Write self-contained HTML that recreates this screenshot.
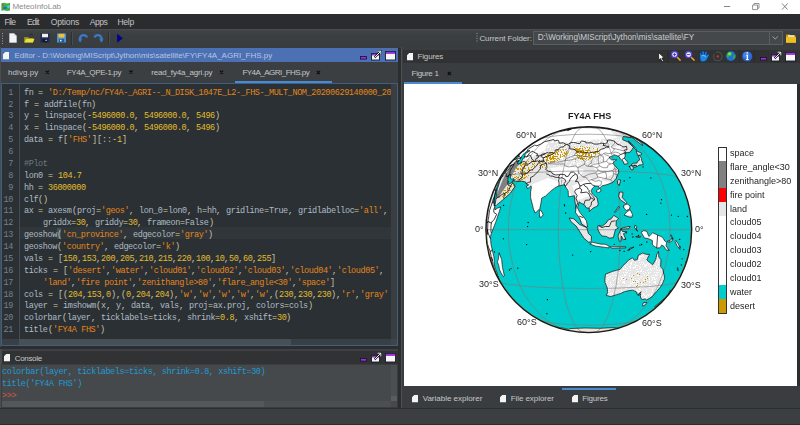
<!DOCTYPE html>
<html><head><meta charset="utf-8">
<style>
*{margin:0;padding:0;box-sizing:border-box}
html,body{width:800px;height:425px;overflow:hidden;background:#2b2d2f;font-family:"Liberation Sans",sans-serif}
.a{position:absolute}
.ui{position:absolute;font-family:"Liberation Sans",sans-serif;font-size:8px;color:#c4c8cb;white-space:pre;line-height:10px}
.cl,.ln{position:absolute;font-family:"Liberation Mono",monospace;font-size:8.5px;letter-spacing:-0.4px;line-height:12px;white-space:pre;color:#aebbc6}
.cl{left:24px}
.ln{left:0;width:13px;text-align:right;color:#758187}
.cl i{display:inline-block;font-style:normal;white-space:pre}
.s{color:#e3861a} .n{color:#e2bd2c} .o{color:#d7cf9f} .p{color:#c9c4a6} .c{color:#6e787e}
.gl{font-family:"Liberation Sans",sans-serif;font-size:9px;line-height:11px;color:#262626;white-space:pre;will-change:transform}
</style></head><body>
<!-- title bar -->
<div class="a" style="left:0;top:0;width:800px;height:14px;background:#fff"></div>
<svg class="a" style="left:0;top:1px" width="12" height="12" viewBox="0 0 12 12"><path d="M1.4 2.2 L4.2 1.8 L6.8 2.6 L10 2 V9.4 L6.8 10 L4.2 9.2 L1.4 9.8Z" fill="#34b034"/><path d="M4.2 1.8 V9.2 M6.8 2.6 V10" stroke="#6ad06a" stroke-width="0.5"/><ellipse cx="5" cy="7" rx="2" ry="1.3" fill="#2a6ad0"/><ellipse cx="8.6" cy="5.8" rx="1.3" ry="1.7" fill="#58c4f0"/><circle cx="3.4" cy="4.2" r="0.9" fill="#d04848"/></svg>
<div class="ui" style="left:12.40px;top:1.9px;font-size:8px;color:#8d8d8d;letter-spacing:-0.025px;">MeteoInfoLab</div>
<svg class="a" style="left:720px;top:0" width="80" height="14" viewBox="0 0 80 14">
<path d="M4 6.5 H10.2" stroke="#777" stroke-width="0.9"/>
<path d="M32.6 5 H37.5 V9.6 H32.6Z M34 5 V3.5 H39 V8.2 H37.5" fill="none" stroke="#888" stroke-width="0.9"/>
<path d="M62 3.4 L67.6 9.6 M67.6 3.4 L62 9.6" stroke="#777" stroke-width="0.9"/>
</svg>
<!-- menu bar -->
<div class="a" style="left:0;top:14px;width:800px;height:15px;background:#2b2c2e"></div>
<div class="ui" style="left:4.40px;top:16.6px;font-size:8.6px;color:#c2c2c2;letter-spacing:-0.756px;">File</div>
<div class="ui" style="left:27.10px;top:16.6px;font-size:8.6px;color:#c2c2c2;letter-spacing:-0.840px;">Edit</div>
<div class="ui" style="left:50.70px;top:16.6px;font-size:8.6px;color:#c2c2c2;letter-spacing:-0.153px;">Options</div>
<div class="ui" style="left:89.70px;top:16.6px;font-size:8.6px;color:#c2c2c2;letter-spacing:-0.464px;">Apps</div>
<div class="ui" style="left:117.50px;top:16.6px;font-size:8.6px;color:#c2c2c2;letter-spacing:-0.332px;">Help</div>
<!-- toolbar -->
<div class="a" style="left:0;top:29px;width:800px;height:19px;background:linear-gradient(#434648,#3c3f41 30%,#393c3e)"></div>
<div class="a" style="left:0;top:29px;width:800px;height:1px;background:#4a4d50"></div>
<svg class="a" style="left:0;top:29px" width="130" height="18" viewBox="0 0 130 18">
<g fill="#9a9a9a"><rect x="2" y="4" width="1" height="1"/><rect x="2" y="6.5" width="1" height="1"/><rect x="2" y="9" width="1" height="1"/><rect x="2" y="11.5" width="1" height="1"/><rect x="2" y="14" width="1" height="1"/></g>
<path d="M9.5 4.5 H14 L16.5 7 V13.5 H9.5Z" fill="#f2f4f8" stroke="#c8ccd4" stroke-width="0.6"/><path d="M14 4.5 V7 H16.5" fill="#d8dce4"/>
<path d="M24 8 H28 L29 9 H33 V13.5 H24Z" fill="#8a8a20"/><path d="M24.5 13.5 L26 9.8 H34.5 L33 13.5Z" fill="#e8e040"/><path d="M29 6.5 Q31 4 33 6" fill="none" stroke="#222" stroke-width="0.8"/>
<rect x="40.5" y="4.5" width="9" height="9" fill="#1a2a5a" stroke="#333" stroke-width="0.5"/><rect x="42" y="4.8" width="6" height="3.5" fill="#f0f0f0"/><rect x="42.5" y="10" width="5" height="3.3" fill="#101830"/><rect x="45.5" y="10.8" width="1.2" height="1.2" fill="#ddd"/>
<rect x="57" y="4.5" width="9" height="9" fill="#4a90d0"/><rect x="58.5" y="4.8" width="6" height="3.8" fill="#f0c040"/><rect x="59" y="10" width="5" height="3.3" fill="#2a5a90"/><rect x="60" y="10.8" width="1.5" height="1.5" fill="#fff"/>
<rect x="71" y="3" width="1" height="13" fill="#2e3032"/><rect x="72" y="3" width="1" height="13" fill="#4a4d4f"/>
<path d="M80 12.5 V9.5 A3.6 3.6 0 0 1 87 8.5" fill="none" stroke="#3a78c8" stroke-width="2.2"/><path d="M78 9.5 L80.2 13.5 L82.3 9.5Z" fill="#3a78c8"/>
<path d="M101.5 12.5 V9.5 A3.6 3.6 0 0 0 94.5 8.5" fill="none" stroke="#3a78c8" stroke-width="2.2"/><path d="M99.2 9.5 L101.3 13.5 L103.5 9.5Z" fill="#3a78c8"/>
<rect x="108" y="3" width="1" height="13" fill="#2e3032"/><rect x="109" y="3" width="1" height="13" fill="#4a4d4f"/>
<path d="M117.2 4.8 L122.8 9.3 L117.2 13.8Z" fill="#00008c"/>
</svg>
<div class="ui" style="left:479.45px;top:34px;font-size:8px;color:#c4c8cb;letter-spacing:-0.095px;">Current Folder:</div>
<svg class="a" style="left:476px;top:31px" width="3" height="14"><g fill="#9a9a9a"><rect x="0.5" y="2" width="1" height="1"/><rect x="0.5" y="4.5" width="1" height="1"/><rect x="0.5" y="7" width="1" height="1"/><rect x="0.5" y="9.5" width="1" height="1"/></g></svg>
<div class="a" style="left:533px;top:31px;width:250px;height:14px;background:#45484a;border:1px solid #5b5e61"></div>
<div class="a" style="left:768.5px;top:32px;width:1px;height:12px;background:#5b5e61"></div>
<svg class="a" style="left:770px;top:33px" width="12" height="10"><path d="M2.6 3.6 L5.2 6 L7.8 3.6" fill="none" stroke="#a8abae" stroke-width="0.9"/></svg>
<div class="ui" style="left:537.70px;top:33.3px;font-size:8.2px;color:#c9cdd0;letter-spacing:-0.008px;">D:\Working\MIScript\Jython\mis\satellite\FY</div>
<svg class="a" style="left:785px;top:33px" width="12" height="11" viewBox="0 0 12 11"><path d="M1 1.5 H4.5 L5.5 2.5 H10.5 V9.5 H1Z" fill="#c89a10"/><path d="M1 4 H11 V9.8 H1Z" fill="#f0c020"/><rect x="3" y="2.2" width="6.5" height="1.6" fill="#f8f0d0"/></svg>

<!-- ================= EDITOR ================= -->
<div class="a" style="left:1px;top:48px;width:397px;height:14px;background:#4b70b4"></div>
<svg class="a" style="left:3px;top:52px" width="7" height="8" viewBox="0 0 7 8"><path d="M2.3 0 H6 V7.2 H0 V2.3 Z" fill="#f4f4f4"/></svg>
<div class="ui" style="left:14.40px;top:50.9px;font-size:8px;color:#b9c7e0;letter-spacing:-0.012px;">Editor - D:\Working\MIScript\Jython\mis\satellite\FY\FY4A_AGRI_FHS.py</div>
<svg class="a" style="left:359.5px;top:49.5px" width="38" height="12" viewBox="0 0 38 12">
<rect x="0.5" y="6.5" width="6" height="2.6" fill="#9b30d9" stroke="#1a1030" stroke-width="0.8"/>
<rect x="11.5" y="3.5" width="8" height="6.5" fill="#f6f6f6" stroke="#1a1a2a" stroke-width="0.9"/>
<rect x="11.9" y="3.9" width="7.2" height="1.6" fill="#9b30d9"/>
<path d="M14.5 7.5 L20.6 1.4 M17.6 1.2 H20.8 V4.4" fill="none" stroke="#1a1a2a" stroke-width="2"/>
<path d="M14.5 7.5 L20.6 1.4 M17.6 1.2 H20.8 V4.4" fill="none" stroke="#fff" stroke-width="0.9"/>
<rect x="25.5" y="1.5" width="10" height="8.5" fill="#f6f6f6" stroke="#1a1a2a" stroke-width="0.9"/>
<rect x="25.9" y="1.9" width="9.2" height="2" fill="#9b30d9"/>
</svg>
<div class="a" style="left:0;top:62px;width:398px;height:21px;background:#3c3f41"></div>
<div class="ui" style="left:8.10px;top:67.7px;font-size:8px;color:#c2c6c9;letter-spacing:0.043px;">hdivg.py</div>
<div class="ui" style="left:66.80px;top:67.7px;font-size:8px;color:#c2c6c9;letter-spacing:-0.378px;">FY4A_QPE-1.py</div>
<div class="ui" style="left:151.30px;top:67.7px;font-size:8px;color:#c2c6c9;letter-spacing:-0.184px;">read_fy4a_agri.py</div>
<div class="ui" style="left:242.45px;top:67.7px;font-size:8px;color:#c2c6c9;letter-spacing:-0.526px;">FY4A_AGRI_FHS.py</div>
<div class="a" style="left:235px;top:81px;width:97px;height:2px;background:#4a8ad0"></div>
<svg class="a" style="left:0;top:0" width="460" height="80"><path d="M45.7 70.7L48.9 73.9M48.9 70.7L45.7 73.9M129.4 70.5L132.6 73.7M132.6 70.5L129.4 73.7M219.9 70.7L223.1 73.9M223.1 70.7L219.9 73.9M316.8 71.0L320.0 74.2M320.0 71.0L316.8 74.2M447.7 71.8L450.9 75.0M450.9 71.8L447.7 75.0" stroke="#0c0c0c" stroke-width="1.1"/></svg>

<!-- code area -->
<div class="a" style="left:0;top:83px;width:398px;height:263px;background:#2b3034;border:1px solid #3f5f82;border-left:2px solid #3f5f82;overflow:hidden">
</div>
<div class="a" style="left:19px;top:227px;width:372px;height:12px;background:#30363a"></div>
<div class="a" style="left:18.5px;top:84px;width:1px;height:255px;background:#464c51"></div>
<div class="a" style="left:0;top:47px;width:1px;height:300px;background:#4a4d4f"></div>
<div class="a" style="left:56.7px;top:227.5px;width:4.8px;height:11px;background:#3c5560"></div>
<div class="a" style="left:0;top:84px;width:391px;height:255px;overflow:hidden">
<div class="cl" style="top:2.65px"><i style="width:9px">fn</i><i style="width:5px"> </i><i class="o" style="width:5px">=</i><i style="width:5px"> </i><i class="s" style="width:475px">'D:/Temp/nc/FY4A-_AGRI--_N_DISK_1047E_L2-_FHS-_MULT_NOM_20200629140000_20200629141459_4000M_V0001.NC'</i></div>
<div class="ln" style="top:2.65px">1</div>
<div class="cl" style="top:14.53px"><i style="width:5px">f</i><i style="width:5px"> </i><i class="o" style="width:5px">=</i><i style="width:5px"> </i><i style="width:33px">addfile</i><i class="p" style="width:5px">(</i><i style="width:9px">fn</i><i class="p" style="width:5px">)</i></div>
<div class="ln" style="top:14.53px">2</div>
<div class="cl" style="top:26.40px"><i style="width:5px">y</i><i style="width:5px"> </i><i class="o" style="width:5px">=</i><i style="width:5px"> </i><i style="width:38px">linspace</i><i class="p" style="width:5px">(</i><i class="o" style="width:5px">-</i><i class="n" style="width:42px">5496000.0</i><i class="p" style="width:5px">,</i><i style="width:5px"> </i><i class="n" style="width:42px">5496000.0</i><i class="p" style="width:5px">,</i><i style="width:5px"> </i><i class="n" style="width:19px">5496</i><i class="p" style="width:5px">)</i></div>
<div class="ln" style="top:26.40px">3</div>
<div class="cl" style="top:38.28px"><i style="width:5px">x</i><i style="width:5px"> </i><i class="o" style="width:5px">=</i><i style="width:5px"> </i><i style="width:38px">linspace</i><i class="p" style="width:5px">(</i><i class="o" style="width:5px">-</i><i class="n" style="width:42px">5496000.0</i><i class="p" style="width:5px">,</i><i style="width:5px"> </i><i class="n" style="width:42px">5496000.0</i><i class="p" style="width:5px">,</i><i style="width:5px"> </i><i class="n" style="width:19px">5496</i><i class="p" style="width:5px">)</i></div>
<div class="ln" style="top:38.28px">4</div>
<div class="cl" style="top:50.15px"><i style="width:19px">data</i><i style="width:5px"> </i><i class="o" style="width:5px">=</i><i style="width:5px"> </i><i style="width:5px">f</i><i class="p" style="width:5px">[</i><i class="s" style="width:24px">'FHS'</i><i class="p" style="width:5px">]</i><i class="p" style="width:5px">[</i><i class="p" style="width:5px">:</i><i class="p" style="width:5px">:</i><i class="o" style="width:5px">-</i><i class="n" style="width:5px">1</i><i class="p" style="width:5px">]</i></div>
<div class="ln" style="top:50.15px">5</div>
<div class="cl" style="top:62.03px"></div>
<div class="ln" style="top:62.03px">6</div>
<div class="cl" style="top:73.90px"><i class="c" style="width:24px">#Plot</i></div>
<div class="ln" style="top:73.90px">7</div>
<div class="cl" style="top:85.78px"><i style="width:19px">lon0</i><i style="width:5px"> </i><i class="o" style="width:5px">=</i><i style="width:5px"> </i><i class="n" style="width:24px">104.7</i></div>
<div class="ln" style="top:85.78px">8</div>
<div class="cl" style="top:97.65px"><i style="width:9px">hh</i><i style="width:5px"> </i><i class="o" style="width:5px">=</i><i style="width:5px"> </i><i class="n" style="width:38px">36000000</i></div>
<div class="ln" style="top:97.65px">9</div>
<div class="cl" style="top:109.53px"><i style="width:14px">clf</i><i class="p" style="width:5px">(</i><i class="p" style="width:5px">)</i></div>
<div class="ln" style="top:109.53px">10</div>
<div class="cl" style="top:121.40px"><i style="width:9px">ax</i><i style="width:5px"> </i><i class="o" style="width:5px">=</i><i style="width:5px"> </i><i style="width:24px">axesm</i><i class="p" style="width:5px">(</i><i style="width:19px">proj</i><i class="o" style="width:5px">=</i><i class="s" style="width:28px">'geos'</i><i class="p" style="width:5px">,</i><i style="width:5px"> </i><i style="width:24px">lon_0</i><i class="o" style="width:5px">=</i><i style="width:19px">lon0</i><i class="p" style="width:5px">,</i><i style="width:5px"> </i><i style="width:5px">h</i><i class="o" style="width:5px">=</i><i style="width:9px">hh</i><i class="p" style="width:5px">,</i><i style="width:5px"> </i><i style="width:38px">gridline</i><i class="o" style="width:5px">=</i><i style="width:19px">True</i><i class="p" style="width:5px">,</i><i style="width:5px"> </i><i style="width:56px">gridlabelloc</i><i class="o" style="width:5px">=</i><i class="s" style="width:24px">'all'</i><i class="p" style="width:5px">,</i></div>
<div class="ln" style="top:121.40px">11</div>
<div class="cl" style="top:133.28px"><i style="width:19px">    </i><i style="width:28px">griddx</i><i class="o" style="width:5px">=</i><i class="n" style="width:9px">30</i><i class="p" style="width:5px">,</i><i style="width:5px"> </i><i style="width:28px">griddy</i><i class="o" style="width:5px">=</i><i class="n" style="width:9px">30</i><i class="p" style="width:5px">,</i><i style="width:5px"> </i><i style="width:33px">frameon</i><i class="o" style="width:5px">=</i><i style="width:24px">False</i><i class="p" style="width:5px">)</i></div>
<div class="ln" style="top:133.28px">12</div>
<div class="cl" style="top:145.15px"><i style="width:33px">geoshow</i><i class="p" style="width:5px">(</i><i class="s" style="width:61px">'cn_province'</i><i class="p" style="width:5px">,</i><i style="width:5px"> </i><i style="width:42px">edgecolor</i><i class="o" style="width:5px">=</i><i class="s" style="width:28px">'gray'</i><i class="p" style="width:5px">)</i></div>
<div class="ln" style="top:145.15px">13</div>
<div class="cl" style="top:157.03px"><i style="width:33px">geoshow</i><i class="p" style="width:5px">(</i><i class="s" style="width:42px">'country'</i><i class="p" style="width:5px">,</i><i style="width:5px"> </i><i style="width:42px">edgecolor</i><i class="o" style="width:5px">=</i><i class="s" style="width:14px">'k'</i><i class="p" style="width:5px">)</i></div>
<div class="ln" style="top:157.03px">14</div>
<div class="cl" style="top:168.90px"><i style="width:19px">vals</i><i style="width:5px"> </i><i class="o" style="width:5px">=</i><i style="width:5px"> </i><i class="p" style="width:5px">[</i><i class="n" style="width:14px">150</i><i class="p" style="width:5px">,</i><i class="n" style="width:14px">153</i><i class="p" style="width:5px">,</i><i class="n" style="width:14px">200</i><i class="p" style="width:5px">,</i><i class="n" style="width:14px">205</i><i class="p" style="width:5px">,</i><i class="n" style="width:14px">210</i><i class="p" style="width:5px">,</i><i class="n" style="width:14px">215</i><i class="p" style="width:5px">,</i><i class="n" style="width:14px">220</i><i class="p" style="width:5px">,</i><i class="n" style="width:14px">100</i><i class="p" style="width:5px">,</i><i class="n" style="width:9px">10</i><i class="p" style="width:5px">,</i><i class="n" style="width:9px">50</i><i class="p" style="width:5px">,</i><i class="n" style="width:9px">60</i><i class="p" style="width:5px">,</i><i class="n" style="width:14px">255</i><i class="p" style="width:5px">]</i></div>
<div class="ln" style="top:168.90px">15</div>
<div class="cl" style="top:180.77px"><i style="width:24px">ticks</i><i style="width:5px"> </i><i class="o" style="width:5px">=</i><i style="width:5px"> </i><i class="p" style="width:5px">[</i><i class="s" style="width:38px">'desert'</i><i class="p" style="width:5px">,</i><i class="s" style="width:33px">'water'</i><i class="p" style="width:5px">,</i><i class="s" style="width:42px">'cloud01'</i><i class="p" style="width:5px">,</i><i class="s" style="width:42px">'cloud02'</i><i class="p" style="width:5px">,</i><i class="s" style="width:42px">'cloud03'</i><i class="p" style="width:5px">,</i><i class="s" style="width:42px">'cloud04'</i><i class="p" style="width:5px">,</i><i class="s" style="width:42px">'cloud05'</i><i class="p" style="width:5px">,</i></div>
<div class="ln" style="top:180.77px">16</div>
<div class="cl" style="top:192.65px"><i style="width:19px">    </i><i class="s" style="width:28px">'land'</i><i class="p" style="width:5px">,</i><i class="s" style="width:56px">'fire point'</i><i class="p" style="width:5px">,</i><i class="s" style="width:75px">'zenithangle&gt;80'</i><i class="p" style="width:5px">,</i><i class="s" style="width:75px">'flare_angle&lt;30'</i><i class="p" style="width:5px">,</i><i class="s" style="width:33px">'space'</i><i class="p" style="width:5px">]</i></div>
<div class="ln" style="top:192.65px">17</div>
<div class="cl" style="top:204.52px"><i style="width:19px">cols</i><i style="width:5px"> </i><i class="o" style="width:5px">=</i><i style="width:5px"> </i><i class="p" style="width:5px">[</i><i class="p" style="width:5px">(</i><i class="n" style="width:14px">204</i><i class="p" style="width:5px">,</i><i class="n" style="width:14px">153</i><i class="p" style="width:5px">,</i><i class="n" style="width:5px">0</i><i class="p" style="width:5px">)</i><i class="p" style="width:5px">,</i><i class="p" style="width:5px">(</i><i class="n" style="width:5px">0</i><i class="p" style="width:5px">,</i><i class="n" style="width:14px">204</i><i class="p" style="width:5px">,</i><i class="n" style="width:14px">204</i><i class="p" style="width:5px">)</i><i class="p" style="width:5px">,</i><i class="s" style="width:14px">'w'</i><i class="p" style="width:5px">,</i><i class="s" style="width:14px">'w'</i><i class="p" style="width:5px">,</i><i class="s" style="width:14px">'w'</i><i class="p" style="width:5px">,</i><i class="s" style="width:14px">'w'</i><i class="p" style="width:5px">,</i><i class="s" style="width:14px">'w'</i><i class="p" style="width:5px">,</i><i class="p" style="width:5px">(</i><i class="n" style="width:14px">230</i><i class="p" style="width:5px">,</i><i class="n" style="width:14px">230</i><i class="p" style="width:5px">,</i><i class="n" style="width:14px">230</i><i class="p" style="width:5px">)</i><i class="p" style="width:5px">,</i><i class="s" style="width:14px">'r'</i><i class="p" style="width:5px">,</i><i class="s" style="width:28px">'gray'</i></div>
<div class="ln" style="top:204.52px">18</div>
<div class="cl" style="top:216.40px"><i style="width:24px">layer</i><i style="width:5px"> </i><i class="o" style="width:5px">=</i><i style="width:5px"> </i><i style="width:33px">imshowm</i><i class="p" style="width:5px">(</i><i style="width:5px">x</i><i class="p" style="width:5px">,</i><i style="width:5px"> </i><i style="width:5px">y</i><i class="p" style="width:5px">,</i><i style="width:5px"> </i><i style="width:19px">data</i><i class="p" style="width:5px">,</i><i style="width:5px"> </i><i style="width:19px">vals</i><i class="p" style="width:5px">,</i><i style="width:5px"> </i><i style="width:19px">proj</i><i class="o" style="width:5px">=</i><i style="width:9px">ax</i><i class="o" style="width:5px">.</i><i style="width:19px">proj</i><i class="p" style="width:5px">,</i><i style="width:5px"> </i><i style="width:28px">colors</i><i class="o" style="width:5px">=</i><i style="width:19px">cols</i><i class="p" style="width:5px">)</i></div>
<div class="ln" style="top:216.40px">19</div>
<div class="cl" style="top:228.27px"><i style="width:38px">colorbar</i><i class="p" style="width:5px">(</i><i style="width:24px">layer</i><i class="p" style="width:5px">,</i><i style="width:5px"> </i><i style="width:47px">ticklabels</i><i class="o" style="width:5px">=</i><i style="width:24px">ticks</i><i class="p" style="width:5px">,</i><i style="width:5px"> </i><i style="width:28px">shrink</i><i class="o" style="width:5px">=</i><i class="n" style="width:14px">0.8</i><i class="p" style="width:5px">,</i><i style="width:5px"> </i><i style="width:28px">xshift</i><i class="o" style="width:5px">=</i><i class="n" style="width:9px">30</i><i class="p" style="width:5px">)</i></div>
<div class="ln" style="top:228.27px">20</div>
<div class="cl" style="top:240.15px"><i style="width:24px">title</i><i class="p" style="width:5px">(</i><i class="s" style="width:47px">'FY4A FHS'</i><i class="p" style="width:5px">)</i></div>
<div class="ln" style="top:240.15px">21</div>
</div>
<div class="a" style="left:391px;top:84px;width:6px;height:255px;background:#3b3e41"></div>
<div class="a" style="left:2px;top:339px;width:389px;height:6px;background:#3a3f43"></div>
<div class="a" style="left:19px;top:339px;width:272px;height:6px;background:#4a4f53"></div>
<div class="a" style="left:391px;top:339px;width:6px;height:6px;background:#3f4448"></div>

<!-- ================= CONSOLE ================= -->
<div class="a" style="left:0;top:348.5px;width:398px;height:2.5px;background:#3e4143"></div>
<div class="a" style="left:0;top:351px;width:398px;height:13px;background:#303234"></div>
<div class="a" style="left:0;top:348.5px;width:1.5px;height:59px;background:#4a4d4f"></div>
<svg class="a" style="left:3.7px;top:354px" width="7" height="8" viewBox="0 0 7 8"><path d="M2.3 0 H6 V7.2 H0 V2.3 Z" fill="#f4f4f4"/></svg>
<div class="ui" style="left:14.70px;top:354px;font-size:8px;color:#c4c8cb;letter-spacing:-0.317px;">Console</div>
<svg class="a" style="left:359.5px;top:352px" width="38" height="12" viewBox="0 0 38 12">
<rect x="0.5" y="6.5" width="6" height="2.6" fill="#9b30d9" stroke="#1a1030" stroke-width="0.8"/>
<rect x="11.5" y="3.5" width="8" height="6.5" fill="#f6f6f6" stroke="#1a1a2a" stroke-width="0.9"/>
<rect x="11.9" y="3.9" width="7.2" height="1.6" fill="#9b30d9"/>
<path d="M14.5 7.5 L20.6 1.4 M17.6 1.2 H20.8 V4.4" fill="none" stroke="#1a1a2a" stroke-width="2"/>
<path d="M14.5 7.5 L20.6 1.4 M17.6 1.2 H20.8 V4.4" fill="none" stroke="#fff" stroke-width="0.9"/>
<rect x="25.5" y="1.5" width="10" height="8.5" fill="#f6f6f6" stroke="#1a1a2a" stroke-width="0.9"/>
<rect x="25.9" y="1.9" width="9.2" height="2" fill="#9b30d9"/>
</svg>
<div class="a" style="left:1px;top:364px;width:397px;height:44px;background:#46494b;border:1px solid #3a3c3e"></div>
<div class="cl" style="left:2px;top:366.2px;color:#1e9ad4">colorbar(layer, ticklabels=ticks, shrink=0.8, xshift=30)</div>
<div class="cl" style="left:2px;top:378.2px;color:#1e9ad4">title('FY4A FHS')</div>
<div class="cl" style="left:2px;top:390.2px;color:#d9534f">&gt;&gt;&gt;</div>
<div class="a" style="left:391px;top:365px;width:6px;height:36px;background:#4c4f51"></div>
<div class="a" style="left:391px;top:396px;width:6px;height:5px;background:#5a5d60"></div>
<div class="a" style="left:2px;top:401px;width:389px;height:6px;background:#4c4f51"></div>
<div class="a" style="left:2px;top:401px;width:262px;height:6px;background:#55585b"></div>

<!-- ================= FIGURES ================= -->
<div class="a" style="left:401px;top:47px;width:399px;height:361px;background:#3a3d3f;border-left:1px solid #4e5153"></div>
<div class="a" style="left:403px;top:49.5px;width:397px;height:13px;background:#303234"></div>
<svg class="a" style="left:406.5px;top:53px" width="7" height="8" viewBox="0 0 7 8"><path d="M2.3 0 H6 V7.2 H0 V2.3 Z" fill="#f4f4f4"/></svg>
<svg class="a" style="left:650px;top:48px" width="110" height="16" viewBox="650 48 110 16">
<path d="M658.6 52.6 V60.2 L660.4 58.6 L662.2 61.8 L663.6 61 L661.9 58 L664.3 57.8Z" fill="#fafafa" stroke="#111" stroke-width="0.8" stroke-linejoin="round"/>
<rect x="667.6" y="50" width="1" height="13" fill="#2a2c2e"/>
<path d="M676.6 56.6 L680.6 60.6" stroke="#222" stroke-width="2.6"/><path d="M676.6 56.6 L680.6 60.6" stroke="#f0a030" stroke-width="1.5"/>
<circle cx="674.6" cy="54.6" r="3.1" fill="#f4f2ff" stroke="#5040d0" stroke-width="1.3"/><path d="M672.9 54.6 H676.3 M674.6 52.9 V56.3" stroke="#4030b0" stroke-width="0.9"/>
<path d="M690.6 56.6 L694.6 60.6" stroke="#222" stroke-width="2.6"/><path d="M690.6 56.6 L694.6 60.6" stroke="#f0a030" stroke-width="1.5"/>
<circle cx="688.6" cy="54.6" r="3.1" fill="#f4f2ff" stroke="#5040d0" stroke-width="1.3"/><path d="M686.9 54.6 H690.3" stroke="#4030b0" stroke-width="0.9"/>
<path d="M700 55 Q699.5 52 701.2 52.5 L702 55 L702.2 51.3 Q703.5 50.6 704 51.5 L704.3 54.8 L705.5 51.6 Q706.8 51.3 707 52.4 L706.3 55.5 L708 54 Q709.5 54 709 55.6 L706.5 60 Q705 62 702.5 61.8 Q700 61.2 700 58.5Z" fill="#1e88e0" stroke="#0a3a80" stroke-width="0.6"/>
<path d="M701.5 56 Q703.5 54.5 706 56.5" fill="none" stroke="#8fd0ff" stroke-width="0.8"/>
<circle cx="717.8" cy="56.4" r="4.3" fill="none" stroke="#4a4c4e" stroke-width="1.3"/><rect x="713" y="51" width="3" height="3" fill="#303234"/>
<circle cx="717.8" cy="56.4" r="1.2" fill="#d83020"/>
<circle cx="730.9" cy="56.1" r="4.8" fill="#2070d8"/>
<path d="M727 53.5 Q729 51.5 731 52 L732.5 54 L731 56 L729.5 55.5 L728.5 57.5 L726.5 57 Z M733 55.5 L735.5 55 L735.2 58 L733.5 59.5Z" fill="#30b030"/>
<circle cx="729.5" cy="53.8" r="1.6" fill="#a8f0a0" opacity="0.6"/>
<rect x="739.2" y="50" width="1" height="13" fill="#2a2c2e"/>
<circle cx="747.2" cy="56.4" r="5" fill="#2a68d8"/><circle cx="746.4" cy="55" r="3.2" fill="#5a94f0" opacity="0.6"/>
<path d="M746.6 52.3 h1.4 v1.3 h-1.4z M746.2 54.8 h1.8 v4.2 h0.7 v0.9 h-2.6 v-0.9 h0.6 v-3.3 h-0.5z" fill="#fff"/>
<rect x="754" y="50" width="1" height="13" fill="#2a2c2e"/>
</svg>
<svg class="a" style="left:760px;top:51px" width="38" height="12" viewBox="0 0 38 12">
<rect x="0.5" y="6.5" width="6" height="2.6" fill="#9b30d9" stroke="#1a1030" stroke-width="0.8"/>
<rect x="11.5" y="3.5" width="8" height="6.5" fill="#f6f6f6" stroke="#1a1a2a" stroke-width="0.9"/>
<rect x="11.9" y="3.9" width="7.2" height="1.6" fill="#9b30d9"/>
<path d="M14.5 7.5 L20.6 1.4 M17.6 1.2 H20.8 V4.4" fill="none" stroke="#1a1a2a" stroke-width="2"/>
<path d="M14.5 7.5 L20.6 1.4 M17.6 1.2 H20.8 V4.4" fill="none" stroke="#fff" stroke-width="0.9"/>
<rect x="25.5" y="1.5" width="10" height="8.5" fill="#f6f6f6" stroke="#1a1a2a" stroke-width="0.9"/>
<rect x="25.9" y="1.9" width="9.2" height="2" fill="#9b30d9"/>
</svg>
<div class="ui" style="left:417.50px;top:52px;font-size:8px;color:#c4c8cb;letter-spacing:-0.146px;">Figures</div>
<div class="ui" style="left:411.60px;top:69px;font-size:8px;color:#c4c8cb;letter-spacing:-0.300px;">Figure 1</div>
<div class="a" style="left:404px;top:82px;width:58px;height:2px;background:#4a8ad0"></div>
<svg class="a" style="left:440px;top:65px" width="20" height="16"><path d="M7.7 6.8L10.9 10M10.9 6.8L7.7 10" stroke="#0c0c0c" stroke-width="1.1"/></svg>
<div class="a" style="left:404px;top:84px;width:393px;height:302px;background:#fff"></div>
<div class="a" style="left:797px;top:84px;width:3px;height:302px;background:#2b2d2f"></div>
<svg class="a" style="left:0;top:0" width="800" height="425" viewBox="0 0 800 425">
<defs><pattern id="pd" width="29" height="29" patternUnits="userSpaceOnUse"><path fill="#cc9900" d="M0 0h1v1h-1zM3 0h1v1h-1zM4 0h1v1h-1zM5 0h1v1h-1zM8 0h1v1h-1zM9 0h1v1h-1zM11 0h1v1h-1zM13 0h1v1h-1zM14 0h1v1h-1zM16 0h1v1h-1zM19 0h1v1h-1zM20 0h1v1h-1zM21 0h1v1h-1zM23 0h1v1h-1zM24 0h1v1h-1zM25 0h1v1h-1zM26 0h1v1h-1zM27 0h1v1h-1zM28 0h1v1h-1zM0 1h1v1h-1zM1 1h1v1h-1zM2 1h1v1h-1zM3 1h1v1h-1zM4 1h1v1h-1zM5 1h1v1h-1zM6 1h1v1h-1zM8 1h1v1h-1zM10 1h1v1h-1zM13 1h1v1h-1zM14 1h1v1h-1zM18 1h1v1h-1zM21 1h1v1h-1zM22 1h1v1h-1zM25 1h1v1h-1zM26 1h1v1h-1zM27 1h1v1h-1zM28 1h1v1h-1zM1 2h1v1h-1zM2 2h1v1h-1zM3 2h1v1h-1zM6 2h1v1h-1zM7 2h1v1h-1zM8 2h1v1h-1zM10 2h1v1h-1zM11 2h1v1h-1zM12 2h1v1h-1zM13 2h1v1h-1zM14 2h1v1h-1zM17 2h1v1h-1zM18 2h1v1h-1zM19 2h1v1h-1zM20 2h1v1h-1zM23 2h1v1h-1zM25 2h1v1h-1zM26 2h1v1h-1zM28 2h1v1h-1zM0 3h1v1h-1zM1 3h1v1h-1zM2 3h1v1h-1zM4 3h1v1h-1zM10 3h1v1h-1zM11 3h1v1h-1zM12 3h1v1h-1zM13 3h1v1h-1zM15 3h1v1h-1zM16 3h1v1h-1zM17 3h1v1h-1zM18 3h1v1h-1zM19 3h1v1h-1zM20 3h1v1h-1zM21 3h1v1h-1zM24 3h1v1h-1zM25 3h1v1h-1zM26 3h1v1h-1zM27 3h1v1h-1zM28 3h1v1h-1zM4 4h1v1h-1zM7 4h1v1h-1zM8 4h1v1h-1zM9 4h1v1h-1zM11 4h1v1h-1zM12 4h1v1h-1zM14 4h1v1h-1zM15 4h1v1h-1zM16 4h1v1h-1zM17 4h1v1h-1zM18 4h1v1h-1zM19 4h1v1h-1zM21 4h1v1h-1zM22 4h1v1h-1zM23 4h1v1h-1zM24 4h1v1h-1zM25 4h1v1h-1zM26 4h1v1h-1zM27 4h1v1h-1zM28 4h1v1h-1zM1 5h1v1h-1zM2 5h1v1h-1zM5 5h1v1h-1zM6 5h1v1h-1zM7 5h1v1h-1zM9 5h1v1h-1zM12 5h1v1h-1zM13 5h1v1h-1zM16 5h1v1h-1zM17 5h1v1h-1zM19 5h1v1h-1zM20 5h1v1h-1zM21 5h1v1h-1zM23 5h1v1h-1zM24 5h1v1h-1zM27 5h1v1h-1zM0 6h1v1h-1zM3 6h1v1h-1zM4 6h1v1h-1zM5 6h1v1h-1zM7 6h1v1h-1zM10 6h1v1h-1zM11 6h1v1h-1zM15 6h1v1h-1zM16 6h1v1h-1zM17 6h1v1h-1zM18 6h1v1h-1zM20 6h1v1h-1zM21 6h1v1h-1zM22 6h1v1h-1zM24 6h1v1h-1zM25 6h1v1h-1zM26 6h1v1h-1zM0 7h1v1h-1zM1 7h1v1h-1zM2 7h1v1h-1zM5 7h1v1h-1zM6 7h1v1h-1zM10 7h1v1h-1zM13 7h1v1h-1zM15 7h1v1h-1zM17 7h1v1h-1zM18 7h1v1h-1zM20 7h1v1h-1zM24 7h1v1h-1zM25 7h1v1h-1zM26 7h1v1h-1zM2 8h1v1h-1zM3 8h1v1h-1zM4 8h1v1h-1zM5 8h1v1h-1zM6 8h1v1h-1zM10 8h1v1h-1zM13 8h1v1h-1zM14 8h1v1h-1zM15 8h1v1h-1zM16 8h1v1h-1zM17 8h1v1h-1zM19 8h1v1h-1zM21 8h1v1h-1zM22 8h1v1h-1zM25 8h1v1h-1zM27 8h1v1h-1zM28 8h1v1h-1zM1 9h1v1h-1zM2 9h1v1h-1zM4 9h1v1h-1zM5 9h1v1h-1zM6 9h1v1h-1zM7 9h1v1h-1zM9 9h1v1h-1zM11 9h1v1h-1zM14 9h1v1h-1zM15 9h1v1h-1zM16 9h1v1h-1zM17 9h1v1h-1zM19 9h1v1h-1zM20 9h1v1h-1zM22 9h1v1h-1zM23 9h1v1h-1zM24 9h1v1h-1zM25 9h1v1h-1zM26 9h1v1h-1zM1 10h1v1h-1zM2 10h1v1h-1zM5 10h1v1h-1zM8 10h1v1h-1zM9 10h1v1h-1zM10 10h1v1h-1zM11 10h1v1h-1zM12 10h1v1h-1zM13 10h1v1h-1zM15 10h1v1h-1zM19 10h1v1h-1zM20 10h1v1h-1zM21 10h1v1h-1zM22 10h1v1h-1zM25 10h1v1h-1zM26 10h1v1h-1zM27 10h1v1h-1zM28 10h1v1h-1zM0 11h1v1h-1zM1 11h1v1h-1zM2 11h1v1h-1zM3 11h1v1h-1zM4 11h1v1h-1zM5 11h1v1h-1zM6 11h1v1h-1zM7 11h1v1h-1zM9 11h1v1h-1zM11 11h1v1h-1zM13 11h1v1h-1zM14 11h1v1h-1zM16 11h1v1h-1zM18 11h1v1h-1zM22 11h1v1h-1zM23 11h1v1h-1zM24 11h1v1h-1zM26 11h1v1h-1zM28 11h1v1h-1zM1 12h1v1h-1zM2 12h1v1h-1zM9 12h1v1h-1zM10 12h1v1h-1zM11 12h1v1h-1zM14 12h1v1h-1zM15 12h1v1h-1zM18 12h1v1h-1zM19 12h1v1h-1zM21 12h1v1h-1zM22 12h1v1h-1zM23 12h1v1h-1zM24 12h1v1h-1zM25 12h1v1h-1zM27 12h1v1h-1zM28 12h1v1h-1zM0 13h1v1h-1zM1 13h1v1h-1zM2 13h1v1h-1zM3 13h1v1h-1zM4 13h1v1h-1zM6 13h1v1h-1zM7 13h1v1h-1zM9 13h1v1h-1zM10 13h1v1h-1zM11 13h1v1h-1zM12 13h1v1h-1zM14 13h1v1h-1zM17 13h1v1h-1zM18 13h1v1h-1zM19 13h1v1h-1zM20 13h1v1h-1zM21 13h1v1h-1zM22 13h1v1h-1zM25 13h1v1h-1zM27 13h1v1h-1zM28 13h1v1h-1zM0 14h1v1h-1zM2 14h1v1h-1zM5 14h1v1h-1zM8 14h1v1h-1zM11 14h1v1h-1zM15 14h1v1h-1zM16 14h1v1h-1zM17 14h1v1h-1zM18 14h1v1h-1zM19 14h1v1h-1zM21 14h1v1h-1zM24 14h1v1h-1zM25 14h1v1h-1zM26 14h1v1h-1zM28 14h1v1h-1zM3 15h1v1h-1zM6 15h1v1h-1zM11 15h1v1h-1zM14 15h1v1h-1zM16 15h1v1h-1zM17 15h1v1h-1zM18 15h1v1h-1zM19 15h1v1h-1zM22 15h1v1h-1zM24 15h1v1h-1zM25 15h1v1h-1zM26 15h1v1h-1zM27 15h1v1h-1zM0 16h1v1h-1zM1 16h1v1h-1zM2 16h1v1h-1zM3 16h1v1h-1zM7 16h1v1h-1zM8 16h1v1h-1zM9 16h1v1h-1zM10 16h1v1h-1zM11 16h1v1h-1zM12 16h1v1h-1zM17 16h1v1h-1zM18 16h1v1h-1zM21 16h1v1h-1zM22 16h1v1h-1zM23 16h1v1h-1zM24 16h1v1h-1zM26 16h1v1h-1zM28 16h1v1h-1zM3 17h1v1h-1zM4 17h1v1h-1zM5 17h1v1h-1zM6 17h1v1h-1zM7 17h1v1h-1zM8 17h1v1h-1zM9 17h1v1h-1zM10 17h1v1h-1zM11 17h1v1h-1zM12 17h1v1h-1zM13 17h1v1h-1zM14 17h1v1h-1zM17 17h1v1h-1zM19 17h1v1h-1zM20 17h1v1h-1zM21 17h1v1h-1zM22 17h1v1h-1zM23 17h1v1h-1zM26 17h1v1h-1zM28 17h1v1h-1zM1 18h1v1h-1zM4 18h1v1h-1zM5 18h1v1h-1zM7 18h1v1h-1zM8 18h1v1h-1zM9 18h1v1h-1zM10 18h1v1h-1zM11 18h1v1h-1zM12 18h1v1h-1zM14 18h1v1h-1zM18 18h1v1h-1zM23 18h1v1h-1zM3 19h1v1h-1zM4 19h1v1h-1zM7 19h1v1h-1zM8 19h1v1h-1zM10 19h1v1h-1zM11 19h1v1h-1zM12 19h1v1h-1zM13 19h1v1h-1zM15 19h1v1h-1zM16 19h1v1h-1zM18 19h1v1h-1zM19 19h1v1h-1zM22 19h1v1h-1zM25 19h1v1h-1zM26 19h1v1h-1zM28 19h1v1h-1zM0 20h1v1h-1zM2 20h1v1h-1zM3 20h1v1h-1zM4 20h1v1h-1zM6 20h1v1h-1zM10 20h1v1h-1zM12 20h1v1h-1zM13 20h1v1h-1zM14 20h1v1h-1zM17 20h1v1h-1zM18 20h1v1h-1zM22 20h1v1h-1zM25 20h1v1h-1zM26 20h1v1h-1zM0 21h1v1h-1zM2 21h1v1h-1zM4 21h1v1h-1zM8 21h1v1h-1zM9 21h1v1h-1zM10 21h1v1h-1zM11 21h1v1h-1zM13 21h1v1h-1zM15 21h1v1h-1zM18 21h1v1h-1zM19 21h1v1h-1zM20 21h1v1h-1zM21 21h1v1h-1zM22 21h1v1h-1zM23 21h1v1h-1zM24 21h1v1h-1zM25 21h1v1h-1zM27 21h1v1h-1zM28 21h1v1h-1zM4 22h1v1h-1zM6 22h1v1h-1zM8 22h1v1h-1zM9 22h1v1h-1zM10 22h1v1h-1zM11 22h1v1h-1zM12 22h1v1h-1zM13 22h1v1h-1zM15 22h1v1h-1zM16 22h1v1h-1zM17 22h1v1h-1zM19 22h1v1h-1zM20 22h1v1h-1zM23 22h1v1h-1zM26 22h1v1h-1zM27 22h1v1h-1zM28 22h1v1h-1zM1 23h1v1h-1zM4 23h1v1h-1zM6 23h1v1h-1zM7 23h1v1h-1zM9 23h1v1h-1zM10 23h1v1h-1zM11 23h1v1h-1zM12 23h1v1h-1zM15 23h1v1h-1zM16 23h1v1h-1zM18 23h1v1h-1zM19 23h1v1h-1zM20 23h1v1h-1zM21 23h1v1h-1zM22 23h1v1h-1zM28 23h1v1h-1zM3 24h1v1h-1zM4 24h1v1h-1zM6 24h1v1h-1zM7 24h1v1h-1zM9 24h1v1h-1zM10 24h1v1h-1zM11 24h1v1h-1zM12 24h1v1h-1zM13 24h1v1h-1zM14 24h1v1h-1zM16 24h1v1h-1zM22 24h1v1h-1zM24 24h1v1h-1zM28 24h1v1h-1zM0 25h1v1h-1zM2 25h1v1h-1zM3 25h1v1h-1zM5 25h1v1h-1zM6 25h1v1h-1zM7 25h1v1h-1zM8 25h1v1h-1zM9 25h1v1h-1zM12 25h1v1h-1zM13 25h1v1h-1zM14 25h1v1h-1zM16 25h1v1h-1zM17 25h1v1h-1zM18 25h1v1h-1zM20 25h1v1h-1zM21 25h1v1h-1zM25 25h1v1h-1zM26 25h1v1h-1zM27 25h1v1h-1zM28 25h1v1h-1zM0 26h1v1h-1zM1 26h1v1h-1zM4 26h1v1h-1zM5 26h1v1h-1zM7 26h1v1h-1zM12 26h1v1h-1zM15 26h1v1h-1zM16 26h1v1h-1zM17 26h1v1h-1zM18 26h1v1h-1zM19 26h1v1h-1zM20 26h1v1h-1zM21 26h1v1h-1zM22 26h1v1h-1zM25 26h1v1h-1zM26 26h1v1h-1zM27 26h1v1h-1zM28 26h1v1h-1zM1 27h1v1h-1zM2 27h1v1h-1zM3 27h1v1h-1zM5 27h1v1h-1zM6 27h1v1h-1zM7 27h1v1h-1zM9 27h1v1h-1zM17 27h1v1h-1zM18 27h1v1h-1zM19 27h1v1h-1zM24 27h1v1h-1zM27 27h1v1h-1zM28 27h1v1h-1zM1 28h1v1h-1zM2 28h1v1h-1zM3 28h1v1h-1zM5 28h1v1h-1zM7 28h1v1h-1zM8 28h1v1h-1zM10 28h1v1h-1zM11 28h1v1h-1zM12 28h1v1h-1zM13 28h1v1h-1zM14 28h1v1h-1zM15 28h1v1h-1zM17 28h1v1h-1zM18 28h1v1h-1zM19 28h1v1h-1zM22 28h1v1h-1zM24 28h1v1h-1zM25 28h1v1h-1zM28 28h1v1h-1z"/></pattern><pattern id="pm" width="29" height="29" patternUnits="userSpaceOnUse"><path fill="#cc9900" d="M2 0h1v1h-1zM3 0h1v1h-1zM11 0h1v1h-1zM19 0h1v1h-1zM20 0h1v1h-1zM21 0h1v1h-1zM28 0h1v1h-1zM0 1h1v1h-1zM2 1h1v1h-1zM6 1h1v1h-1zM16 1h1v1h-1zM4 2h1v1h-1zM7 2h1v1h-1zM9 2h1v1h-1zM19 2h1v1h-1zM23 2h1v1h-1zM27 2h1v1h-1zM0 3h1v1h-1zM2 3h1v1h-1zM3 3h1v1h-1zM5 3h1v1h-1zM8 3h1v1h-1zM9 3h1v1h-1zM13 3h1v1h-1zM15 3h1v1h-1zM17 3h1v1h-1zM19 3h1v1h-1zM21 3h1v1h-1zM22 3h1v1h-1zM24 3h1v1h-1zM25 3h1v1h-1zM28 3h1v1h-1zM1 4h1v1h-1zM2 4h1v1h-1zM6 4h1v1h-1zM8 4h1v1h-1zM17 4h1v1h-1zM20 4h1v1h-1zM23 4h1v1h-1zM27 4h1v1h-1zM0 5h1v1h-1zM3 5h1v1h-1zM5 5h1v1h-1zM6 5h1v1h-1zM7 5h1v1h-1zM8 5h1v1h-1zM9 5h1v1h-1zM15 5h1v1h-1zM17 5h1v1h-1zM22 5h1v1h-1zM25 5h1v1h-1zM26 5h1v1h-1zM28 5h1v1h-1zM1 6h1v1h-1zM2 6h1v1h-1zM3 6h1v1h-1zM4 6h1v1h-1zM5 6h1v1h-1zM10 6h1v1h-1zM17 6h1v1h-1zM20 6h1v1h-1zM21 6h1v1h-1zM27 6h1v1h-1zM1 7h1v1h-1zM3 7h1v1h-1zM7 7h1v1h-1zM11 7h1v1h-1zM13 7h1v1h-1zM14 7h1v1h-1zM17 7h1v1h-1zM19 7h1v1h-1zM25 7h1v1h-1zM26 7h1v1h-1zM27 7h1v1h-1zM3 8h1v1h-1zM11 8h1v1h-1zM18 8h1v1h-1zM19 8h1v1h-1zM21 8h1v1h-1zM27 8h1v1h-1zM1 9h1v1h-1zM3 9h1v1h-1zM4 9h1v1h-1zM8 9h1v1h-1zM9 9h1v1h-1zM10 9h1v1h-1zM15 9h1v1h-1zM19 9h1v1h-1zM22 9h1v1h-1zM1 10h1v1h-1zM3 10h1v1h-1zM6 10h1v1h-1zM20 10h1v1h-1zM26 10h1v1h-1zM3 11h1v1h-1zM9 11h1v1h-1zM12 11h1v1h-1zM15 11h1v1h-1zM17 11h1v1h-1zM20 11h1v1h-1zM23 11h1v1h-1zM25 11h1v1h-1zM26 11h1v1h-1zM5 12h1v1h-1zM7 12h1v1h-1zM8 12h1v1h-1zM10 12h1v1h-1zM17 12h1v1h-1zM18 12h1v1h-1zM21 12h1v1h-1zM22 12h1v1h-1zM6 13h1v1h-1zM14 13h1v1h-1zM22 13h1v1h-1zM24 13h1v1h-1zM25 13h1v1h-1zM27 13h1v1h-1zM3 14h1v1h-1zM5 14h1v1h-1zM7 14h1v1h-1zM14 14h1v1h-1zM15 14h1v1h-1zM16 14h1v1h-1zM21 14h1v1h-1zM9 15h1v1h-1zM14 15h1v1h-1zM19 15h1v1h-1zM21 15h1v1h-1zM22 15h1v1h-1zM1 16h1v1h-1zM4 16h1v1h-1zM6 16h1v1h-1zM9 16h1v1h-1zM10 16h1v1h-1zM11 16h1v1h-1zM12 16h1v1h-1zM14 16h1v1h-1zM16 16h1v1h-1zM17 16h1v1h-1zM22 16h1v1h-1zM23 16h1v1h-1zM27 16h1v1h-1zM20 17h1v1h-1zM21 17h1v1h-1zM23 17h1v1h-1zM27 17h1v1h-1zM1 18h1v1h-1zM2 18h1v1h-1zM4 18h1v1h-1zM5 18h1v1h-1zM7 18h1v1h-1zM10 18h1v1h-1zM12 18h1v1h-1zM15 18h1v1h-1zM17 18h1v1h-1zM18 18h1v1h-1zM24 18h1v1h-1zM26 18h1v1h-1zM27 18h1v1h-1zM28 18h1v1h-1zM0 19h1v1h-1zM1 19h1v1h-1zM2 19h1v1h-1zM10 19h1v1h-1zM11 19h1v1h-1zM14 19h1v1h-1zM16 19h1v1h-1zM24 19h1v1h-1zM27 19h1v1h-1zM2 20h1v1h-1zM4 20h1v1h-1zM5 20h1v1h-1zM12 20h1v1h-1zM17 20h1v1h-1zM18 20h1v1h-1zM19 20h1v1h-1zM22 20h1v1h-1zM27 20h1v1h-1zM28 20h1v1h-1zM2 21h1v1h-1zM10 21h1v1h-1zM12 21h1v1h-1zM14 21h1v1h-1zM20 21h1v1h-1zM28 21h1v1h-1zM0 22h1v1h-1zM2 22h1v1h-1zM6 22h1v1h-1zM9 22h1v1h-1zM15 22h1v1h-1zM17 22h1v1h-1zM18 22h1v1h-1zM20 22h1v1h-1zM23 22h1v1h-1zM0 23h1v1h-1zM2 23h1v1h-1zM3 23h1v1h-1zM6 23h1v1h-1zM13 23h1v1h-1zM14 23h1v1h-1zM17 23h1v1h-1zM23 23h1v1h-1zM24 23h1v1h-1zM25 23h1v1h-1zM27 23h1v1h-1zM6 24h1v1h-1zM7 24h1v1h-1zM10 24h1v1h-1zM13 24h1v1h-1zM17 24h1v1h-1zM24 24h1v1h-1zM25 24h1v1h-1zM27 24h1v1h-1zM28 24h1v1h-1zM5 25h1v1h-1zM7 25h1v1h-1zM10 25h1v1h-1zM19 25h1v1h-1zM28 25h1v1h-1zM2 26h1v1h-1zM7 26h1v1h-1zM13 26h1v1h-1zM14 26h1v1h-1zM19 26h1v1h-1zM21 26h1v1h-1zM22 26h1v1h-1zM27 26h1v1h-1zM0 27h1v1h-1zM1 27h1v1h-1zM2 27h1v1h-1zM3 27h1v1h-1zM6 27h1v1h-1zM8 27h1v1h-1zM13 27h1v1h-1zM25 27h1v1h-1zM27 27h1v1h-1zM0 28h1v1h-1zM5 28h1v1h-1zM9 28h1v1h-1zM10 28h1v1h-1zM15 28h1v1h-1zM22 28h1v1h-1z"/></pattern><pattern id="ps" width="31" height="31" patternUnits="userSpaceOnUse"><path fill="#cc9900" d="M6 0h1v1h-1zM25 0h1v1h-1zM13 2h1v1h-1zM15 2h1v1h-1zM25 2h1v1h-1zM30 2h1v1h-1zM20 3h1v1h-1zM23 3h1v1h-1zM2 4h1v1h-1zM17 4h1v1h-1zM29 5h1v1h-1zM17 6h1v1h-1zM24 6h1v1h-1zM16 7h1v1h-1zM19 7h1v1h-1zM26 7h1v1h-1zM23 9h1v1h-1zM26 9h1v1h-1zM0 10h1v1h-1zM9 10h1v1h-1zM3 12h1v1h-1zM19 13h1v1h-1zM18 15h1v1h-1zM19 16h1v1h-1zM3 17h1v1h-1zM11 17h1v1h-1zM13 18h1v1h-1zM3 19h1v1h-1zM13 19h1v1h-1zM18 19h1v1h-1zM25 19h1v1h-1zM19 20h1v1h-1zM20 20h1v1h-1zM23 20h1v1h-1zM2 21h1v1h-1zM3 22h1v1h-1zM27 22h1v1h-1zM0 23h1v1h-1zM15 23h1v1h-1zM17 25h1v1h-1zM19 26h1v1h-1zM0 27h1v1h-1zM2 27h1v1h-1zM13 27h1v1h-1zM28 27h1v1h-1zM27 28h1v1h-1zM3 30h1v1h-1zM11 30h1v1h-1zM27 30h1v1h-1z"/></pattern><pattern id="pwh" width="31" height="31" patternUnits="userSpaceOnUse"><path fill="#ffffff" d="M1 0h1v1h-1zM3 0h1v1h-1zM4 0h1v1h-1zM12 0h1v1h-1zM13 0h1v1h-1zM19 0h1v1h-1zM25 0h1v1h-1zM29 0h1v1h-1zM0 1h1v1h-1zM13 1h1v1h-1zM16 1h1v1h-1zM17 1h1v1h-1zM24 1h1v1h-1zM3 2h1v1h-1zM4 2h1v1h-1zM10 2h1v1h-1zM12 2h1v1h-1zM18 2h1v1h-1zM27 2h1v1h-1zM29 2h1v1h-1zM2 3h1v1h-1zM3 3h1v1h-1zM4 3h1v1h-1zM8 3h1v1h-1zM12 3h1v1h-1zM13 3h1v1h-1zM14 3h1v1h-1zM16 3h1v1h-1zM17 3h1v1h-1zM21 3h1v1h-1zM29 3h1v1h-1zM4 4h1v1h-1zM10 4h1v1h-1zM11 4h1v1h-1zM21 4h1v1h-1zM6 5h1v1h-1zM10 5h1v1h-1zM12 5h1v1h-1zM15 5h1v1h-1zM16 5h1v1h-1zM22 5h1v1h-1zM24 5h1v1h-1zM26 5h1v1h-1zM8 6h1v1h-1zM9 6h1v1h-1zM14 6h1v1h-1zM18 6h1v1h-1zM21 6h1v1h-1zM29 6h1v1h-1zM30 6h1v1h-1zM6 7h1v1h-1zM8 7h1v1h-1zM13 7h1v1h-1zM15 7h1v1h-1zM16 7h1v1h-1zM22 7h1v1h-1zM28 7h1v1h-1zM15 8h1v1h-1zM19 8h1v1h-1zM20 8h1v1h-1zM21 8h1v1h-1zM23 8h1v1h-1zM29 8h1v1h-1zM1 9h1v1h-1zM5 9h1v1h-1zM6 9h1v1h-1zM12 9h1v1h-1zM19 9h1v1h-1zM11 10h1v1h-1zM12 10h1v1h-1zM19 10h1v1h-1zM20 10h1v1h-1zM26 10h1v1h-1zM1 11h1v1h-1zM5 11h1v1h-1zM12 11h1v1h-1zM13 11h1v1h-1zM14 11h1v1h-1zM16 11h1v1h-1zM17 11h1v1h-1zM1 12h1v1h-1zM4 12h1v1h-1zM5 12h1v1h-1zM14 12h1v1h-1zM16 12h1v1h-1zM18 12h1v1h-1zM19 12h1v1h-1zM26 12h1v1h-1zM5 13h1v1h-1zM12 13h1v1h-1zM0 14h1v1h-1zM7 14h1v1h-1zM11 14h1v1h-1zM15 14h1v1h-1zM19 14h1v1h-1zM21 14h1v1h-1zM23 14h1v1h-1zM0 15h1v1h-1zM10 15h1v1h-1zM11 15h1v1h-1zM23 15h1v1h-1zM27 15h1v1h-1zM29 15h1v1h-1zM0 16h1v1h-1zM1 16h1v1h-1zM7 16h1v1h-1zM11 16h1v1h-1zM14 16h1v1h-1zM20 16h1v1h-1zM22 16h1v1h-1zM24 16h1v1h-1zM26 16h1v1h-1zM28 16h1v1h-1zM4 17h1v1h-1zM10 17h1v1h-1zM15 17h1v1h-1zM16 17h1v1h-1zM17 17h1v1h-1zM25 17h1v1h-1zM26 17h1v1h-1zM30 17h1v1h-1zM5 18h1v1h-1zM9 18h1v1h-1zM10 18h1v1h-1zM15 18h1v1h-1zM19 18h1v1h-1zM24 18h1v1h-1zM25 18h1v1h-1zM29 18h1v1h-1zM5 19h1v1h-1zM10 19h1v1h-1zM13 19h1v1h-1zM14 19h1v1h-1zM15 19h1v1h-1zM20 19h1v1h-1zM1 20h1v1h-1zM3 20h1v1h-1zM7 20h1v1h-1zM10 20h1v1h-1zM13 20h1v1h-1zM19 20h1v1h-1zM30 20h1v1h-1zM3 21h1v1h-1zM5 21h1v1h-1zM16 21h1v1h-1zM17 21h1v1h-1zM21 21h1v1h-1zM28 21h1v1h-1zM30 21h1v1h-1zM0 22h1v1h-1zM6 22h1v1h-1zM8 22h1v1h-1zM10 22h1v1h-1zM21 22h1v1h-1zM27 22h1v1h-1zM17 23h1v1h-1zM18 23h1v1h-1zM20 23h1v1h-1zM21 23h1v1h-1zM23 23h1v1h-1zM3 24h1v1h-1zM5 24h1v1h-1zM6 24h1v1h-1zM7 24h1v1h-1zM16 24h1v1h-1zM25 24h1v1h-1zM28 24h1v1h-1zM30 24h1v1h-1zM9 25h1v1h-1zM23 25h1v1h-1zM28 25h1v1h-1zM4 26h1v1h-1zM6 26h1v1h-1zM12 26h1v1h-1zM2 27h1v1h-1zM4 27h1v1h-1zM5 27h1v1h-1zM9 27h1v1h-1zM12 27h1v1h-1zM17 27h1v1h-1zM18 27h1v1h-1zM24 27h1v1h-1zM26 27h1v1h-1zM27 27h1v1h-1zM28 27h1v1h-1zM0 28h1v1h-1zM9 28h1v1h-1zM11 28h1v1h-1zM21 28h1v1h-1zM1 29h1v1h-1zM2 29h1v1h-1zM3 29h1v1h-1zM13 29h1v1h-1zM20 29h1v1h-1zM29 29h1v1h-1zM1 30h1v1h-1zM3 30h1v1h-1zM5 30h1v1h-1zM10 30h1v1h-1zM15 30h1v1h-1zM18 30h1v1h-1zM23 30h1v1h-1zM26 30h1v1h-1zM29 30h1v1h-1z"/></pattern>
<clipPath id="gc"><circle cx="588.8" cy="229.7" r="102.6"/></clipPath>
<clipPath id="lc"><path d="M501.1 177 498.3 183.1 496 189.6 494.6 194.7 493.8 200.8 494 203.4 494.7 206.1 494.9 209.9 497.4 208.2 500.8 206.9 496.2 221 491.3 233.5 490.5 236.3 490.6 240.1 491.1 244.8 493.9 256.9 494.3 260.4 493.9 262.9 495.1 268 497.2 273.1 497.5 275.4 501.1 283 504.1 288.5 499.3 280.9 495.3 273.1 491.9 264.8 489.3 256.3 487.3 247.5 486.2 238.6 485.8 229.7 486.1 221.3 487.2 212.7 489 204.2 491.4 195.9 494.8 187.5 498.8 179.4 503.4 171.9 507.2 166.7 500 177.4 501.2 175.4 501.4 175.6 503.1 174.2 509.1 166.2 507.2 167.5 507.3 166.9 507 167.1 511.5 161.5 507.6 166.2 515.7 157 514.7 158 513.9 158.8 520.9 152.2 528.4 146.1 536.1 141.1 543.8 137 555.5 132.2 551.9 133.5 557.1 131.9 565.6 130.4 571 129 567.3 130.6 572.9 128.6 576.4 128.1 588.5 126.9 593.2 127.7 600.3 128 607.3 128.9 619.4 131.4 627.3 134.1 635.7 137.9 635.9 138.1 635.4 138.3 635.6 138.8 639.8 141.4 642.2 144 642.6 145.2 642.7 145.7 630.4 136.3 630.7 137.6 623.3 136.5 622.8 137.3 622.7 139.7 627.7 141.9 633.5 147.3 630.2 152.2 624.7 153.1 625.3 155.7 624.4 158.4 627.9 162.2 627.7 163.7 624.3 164.3 622.7 160.5 620.4 159.2 619 156.4 613.9 154.7 611.6 156.5 609.5 157 609.4 158.1 611.6 159.8 616.9 159.7 614.3 161.4 612.9 163.4 618.4 169.6 618.8 172.1 616.1 178.5 612.9 182.3 607 184.6 601.9 185.9 599.5 188.3 598.3 186.1 595.2 186 592.7 187.9 591 190.8 592.4 194.1 597.1 197.9 598.2 203.7 597.6 205.9 592.9 208.2 589.2 211.7 589.4 208.4 586.3 207.8 584.3 204.7 581.2 203.3 579.2 201.9 577.5 207.8 579.7 212.3 586.1 220.2 587.7 226.7 586.1 227 581.6 223.8 579.6 218.1 575.5 212.5 576 207.8 574.8 200.7 574.4 195.7 568.4 196.8 568.2 190.9 564.3 184.6 558.1 186.2 554.9 187.9 551.2 190.7 545.6 196 541.6 198.2 541 203.1 539.8 208.6 535.4 213.1 533.5 209.3 530.6 197.6 530.6 191.9 531.4 187.6 531.1 185.8 527.5 188.7 526.4 186.1 528.7 184.9 526.1 183.6 525.5 181.9 521.6 181.1 518.6 181.5 514.2 180.9 514.1 178.8 511.8 179.2 510 178 510.9 174.5 509.2 174.9 507.9 178.1 507.7 182.4 508.8 181.3 507.4 184.1 510.2 183.8 513.3 180.2 512.6 182.7 514.2 184.6 514.9 186.5 510.6 193 503.3 199.5 496.1 205.4 495 205.7 497.3 189.4 499.8 181.2 501.5 177.3 499.9 179.8 501.1 177 Z M499.2 252.8 501.6 259.4 502.5 267.5 504.4 275.9 503.5 276.7 501.1 273.1 499.5 269.6 498.7 265.3 497.3 261.7 498.3 259.6 499.2 252.8 Z M539.9 209.6 542 212.2 543.1 214.6 541.9 216.9 539.7 217.3 539.3 212.8 539.9 209.6 Z M596.5 190.4 599.5 188.7 601.1 189.7 600.3 191.8 598.3 192.4 596.5 191.8 596.5 190.4 Z M618.8 179.6 620.6 180 619.3 185.6 617.7 183.5 617.5 180.8 618.8 179.6 Z M631 165.4 631.5 164.4 633.1 163.3 637 163.1 637.5 161.4 639.7 159.9 639.3 158.1 638.2 156.3 639.5 155.7 641.6 158.3 641.6 160.3 642.9 163.2 643.1 164.7 639.1 165 637.5 166.4 634.6 165.3 631 165.4 Z M629.5 166.4 631.1 165.6 633.2 167.1 633.2 169.6 631.5 170 629.5 166.4 Z M633.9 166.9 634.6 165.1 636.3 165.4 636.2 166.9 634.7 167.5 633.9 166.9 Z M637.6 155.3 636.1 150.5 641.9 153.5 641 155 637.6 155.3 Z M635.8 149.8 636.6 149 633.8 146.3 631.7 143.7 628.2 140.8 635.8 149.8 Z M619.7 192 622.9 192.3 622.8 195 622.1 197.3 627.1 203 626.2 203.8 620.4 199.9 618.6 196.3 619.7 192 Z M624.1 215.1 626.8 211.9 630.1 209.7 632.6 214.6 631.8 217.3 628.6 216.8 624.1 215.1 Z M623.5 205.5 627.2 204 630.2 206 629.5 209 626.4 210.4 623.7 208 623.5 205.5 Z M614.5 212.2 618.8 206.3 619.2 207.9 615.5 212.4 614.5 212.2 Z M597.8 225.9 599.1 225.5 602 226.3 606.2 223 608.2 220 611.2 218.8 613.8 215.3 618.7 218.6 616.3 220.7 616 225.5 618.4 228 615.4 229.7 613.3 237.7 609.2 238.1 606.2 236.4 602 236 599.9 233.5 597.9 229.7 597.8 225.9 Z M569.2 218 573.8 218.8 579.5 224.4 586.7 227.6 588.4 233.5 591.5 236.4 591.1 241.9 588.4 242.1 583.8 238.1 576.2 226.1 571 221.7 569.2 218 Z M589.8 244 592.6 242.3 600.9 244.2 605 244.2 609.1 246 609 247.9 595.7 246.1 589.8 244 Z M610.1 246.8 625.9 246.9 625.8 247.9 612 248.3 610.1 246.8 Z M627.6 250.8 634 247 629.6 248.3 627.6 250.8 Z M618 236 619.3 241.2 621.1 241.2 621.4 236 623.3 239.7 625.8 239.1 623.4 233.7 627.1 231.8 622.4 231.4 620.8 228.7 623.4 227.6 630.2 226.4 628.9 228.7 620.8 229.1 618 236 Z M634.9 225.1 636.9 226.6 636.2 229.1 637.5 231.4 635.6 228.5 634.5 227.6 634.9 225.1 Z M635.7 236.5 640.8 236.3 640.2 237.5 636.1 237.2 635.7 236.5 Z M641.2 232.4 643.9 230.5 646.8 231.5 648.9 236.5 652.7 232.8 662.6 237.3 664.7 240.9 666.7 242.3 666 245.6 668.1 249.1 669.4 250.4 666.1 249.9 663.9 246.3 661.6 245.1 660.1 247.8 656.7 248 652.4 244.9 652.4 240.5 648 238.5 644.6 238.1 641.2 232.4 Z M667.7 240.9 670.2 240.6 672.1 238 672.4 240.6 670.1 242 667.4 241.8 667.7 240.9 Z M670.9 234.7 673.2 238.6 672.9 239.4 670.6 235.3 670.9 234.7 Z M675.2 241.5 676.8 245.3 680 249.3 679.7 247.1 677.9 243.3 675.8 240.5 675.2 241.5 Z M605.5 274.2 612.1 271.5 620.2 269.3 623.1 265.4 625.5 263.4 628.6 260 632.5 257.9 634.3 260.3 637.2 259.8 638.4 255.2 642.8 253.1 646.6 254.4 649.5 254.4 646.7 259.9 652.6 264.8 655.8 259.6 656.7 254.7 658.5 251.2 658.9 257.5 661 259.4 660.6 266.8 662.8 269.4 664.7 277.9 662.9 282.9 660.4 287.1 652.2 296.6 646.7 300 645.4 299 642.5 299.4 640.8 298.5 640.4 295.8 640.7 293.7 639.5 295.3 638.4 295.5 641.2 291.8 637.5 294.8 636.4 291.8 632.5 290 624.5 291.6 620.9 293.4 610.6 296.5 606.2 295.4 607.7 292.5 607.1 287.5 605 282.4 604.9 278.8 605.5 274.2 Z M677.5 267.5 678.1 268.8 678.2 270.9 677.7 270.5 677.4 268.6 677.5 267.5 Z M643.5 302.5 646.9 302.4 644.4 305.5 642.9 306.1 642.7 304.5 643.5 302.5 Z M670.7 289.9 668.6 294 669.1 294 663.7 299.8 667.6 294.9 670.7 289.9 Z M664.1 298.7 661.9 301.3 656.7 306 655.1 307.1 654.7 306.7 664.1 298.7 Z M562.1 130.3 574.6 127.7 562.1 130.3 Z M585.4 126.8 588.9 126.8 585.4 126.8 Z M604 128.2 608.2 128.6 603.4 127.9 604 128.2 Z M620.5 131.7 622 132.2 620.5 131.7 Z M562.8 329.4 551.5 325.8 553.7 326.5 565.3 328.5 568.5 329.5 570.7 328.5 584.9 328 600.4 328.3 611.5 327.7 620.1 327.9 613.3 329.8 606.1 331.3 599 332.2 591.3 332.7 577.2 332 570 331 562.8 329.4 Z"/></clipPath>
</defs>
<g clip-path="url(#gc)">
<circle cx="588.8" cy="229.7" r="103" fill="#00cccc"/>
<path d="M501.1 177 498.3 183.1 496 189.6 494.6 194.7 493.8 200.8 494 203.4 494.7 206.1 494.9 209.9 497.4 208.2 500.8 206.9 496.2 221 491.3 233.5 490.5 236.3 490.6 240.1 491.1 244.8 493.9 256.9 494.3 260.4 493.9 262.9 495.1 268 497.2 273.1 497.5 275.4 501.1 283 504.1 288.5 499.3 280.9 495.3 273.1 491.9 264.8 489.3 256.3 487.3 247.5 486.2 238.6 485.8 229.7 486.1 221.3 487.2 212.7 489 204.2 491.4 195.9 494.8 187.5 498.8 179.4 503.4 171.9 507.2 166.7 500 177.4 501.2 175.4 501.4 175.6 503.1 174.2 509.1 166.2 507.2 167.5 507.3 166.9 507 167.1 511.5 161.5 507.6 166.2 515.7 157 514.7 158 513.9 158.8 520.9 152.2 528.4 146.1 536.1 141.1 543.8 137 555.5 132.2 551.9 133.5 557.1 131.9 565.6 130.4 571 129 567.3 130.6 572.9 128.6 576.4 128.1 588.5 126.9 593.2 127.7 600.3 128 607.3 128.9 619.4 131.4 627.3 134.1 635.7 137.9 635.9 138.1 635.4 138.3 635.6 138.8 639.8 141.4 642.2 144 642.6 145.2 642.7 145.7 630.4 136.3 630.7 137.6 623.3 136.5 622.8 137.3 622.7 139.7 627.7 141.9 633.5 147.3 630.2 152.2 624.7 153.1 625.3 155.7 624.4 158.4 627.9 162.2 627.7 163.7 624.3 164.3 622.7 160.5 620.4 159.2 619 156.4 613.9 154.7 611.6 156.5 609.5 157 609.4 158.1 611.6 159.8 616.9 159.7 614.3 161.4 612.9 163.4 618.4 169.6 618.8 172.1 616.1 178.5 612.9 182.3 607 184.6 601.9 185.9 599.5 188.3 598.3 186.1 595.2 186 592.7 187.9 591 190.8 592.4 194.1 597.1 197.9 598.2 203.7 597.6 205.9 592.9 208.2 589.2 211.7 589.4 208.4 586.3 207.8 584.3 204.7 581.2 203.3 579.2 201.9 577.5 207.8 579.7 212.3 586.1 220.2 587.7 226.7 586.1 227 581.6 223.8 579.6 218.1 575.5 212.5 576 207.8 574.8 200.7 574.4 195.7 568.4 196.8 568.2 190.9 564.3 184.6 558.1 186.2 554.9 187.9 551.2 190.7 545.6 196 541.6 198.2 541 203.1 539.8 208.6 535.4 213.1 533.5 209.3 530.6 197.6 530.6 191.9 531.4 187.6 531.1 185.8 527.5 188.7 526.4 186.1 528.7 184.9 526.1 183.6 525.5 181.9 521.6 181.1 518.6 181.5 514.2 180.9 514.1 178.8 511.8 179.2 510 178 510.9 174.5 509.2 174.9 507.9 178.1 507.7 182.4 508.8 181.3 507.4 184.1 510.2 183.8 513.3 180.2 512.6 182.7 514.2 184.6 514.9 186.5 510.6 193 503.3 199.5 496.1 205.4 495 205.7 497.3 189.4 499.8 181.2 501.5 177.3 499.9 179.8 501.1 177 Z M499.2 252.8 501.6 259.4 502.5 267.5 504.4 275.9 503.5 276.7 501.1 273.1 499.5 269.6 498.7 265.3 497.3 261.7 498.3 259.6 499.2 252.8 Z M539.9 209.6 542 212.2 543.1 214.6 541.9 216.9 539.7 217.3 539.3 212.8 539.9 209.6 Z M596.5 190.4 599.5 188.7 601.1 189.7 600.3 191.8 598.3 192.4 596.5 191.8 596.5 190.4 Z M618.8 179.6 620.6 180 619.3 185.6 617.7 183.5 617.5 180.8 618.8 179.6 Z M631 165.4 631.5 164.4 633.1 163.3 637 163.1 637.5 161.4 639.7 159.9 639.3 158.1 638.2 156.3 639.5 155.7 641.6 158.3 641.6 160.3 642.9 163.2 643.1 164.7 639.1 165 637.5 166.4 634.6 165.3 631 165.4 Z M629.5 166.4 631.1 165.6 633.2 167.1 633.2 169.6 631.5 170 629.5 166.4 Z M633.9 166.9 634.6 165.1 636.3 165.4 636.2 166.9 634.7 167.5 633.9 166.9 Z M637.6 155.3 636.1 150.5 641.9 153.5 641 155 637.6 155.3 Z M635.8 149.8 636.6 149 633.8 146.3 631.7 143.7 628.2 140.8 635.8 149.8 Z M619.7 192 622.9 192.3 622.8 195 622.1 197.3 627.1 203 626.2 203.8 620.4 199.9 618.6 196.3 619.7 192 Z M624.1 215.1 626.8 211.9 630.1 209.7 632.6 214.6 631.8 217.3 628.6 216.8 624.1 215.1 Z M623.5 205.5 627.2 204 630.2 206 629.5 209 626.4 210.4 623.7 208 623.5 205.5 Z M614.5 212.2 618.8 206.3 619.2 207.9 615.5 212.4 614.5 212.2 Z M597.8 225.9 599.1 225.5 602 226.3 606.2 223 608.2 220 611.2 218.8 613.8 215.3 618.7 218.6 616.3 220.7 616 225.5 618.4 228 615.4 229.7 613.3 237.7 609.2 238.1 606.2 236.4 602 236 599.9 233.5 597.9 229.7 597.8 225.9 Z M569.2 218 573.8 218.8 579.5 224.4 586.7 227.6 588.4 233.5 591.5 236.4 591.1 241.9 588.4 242.1 583.8 238.1 576.2 226.1 571 221.7 569.2 218 Z M589.8 244 592.6 242.3 600.9 244.2 605 244.2 609.1 246 609 247.9 595.7 246.1 589.8 244 Z M610.1 246.8 625.9 246.9 625.8 247.9 612 248.3 610.1 246.8 Z M627.6 250.8 634 247 629.6 248.3 627.6 250.8 Z M618 236 619.3 241.2 621.1 241.2 621.4 236 623.3 239.7 625.8 239.1 623.4 233.7 627.1 231.8 622.4 231.4 620.8 228.7 623.4 227.6 630.2 226.4 628.9 228.7 620.8 229.1 618 236 Z M634.9 225.1 636.9 226.6 636.2 229.1 637.5 231.4 635.6 228.5 634.5 227.6 634.9 225.1 Z M635.7 236.5 640.8 236.3 640.2 237.5 636.1 237.2 635.7 236.5 Z M641.2 232.4 643.9 230.5 646.8 231.5 648.9 236.5 652.7 232.8 662.6 237.3 664.7 240.9 666.7 242.3 666 245.6 668.1 249.1 669.4 250.4 666.1 249.9 663.9 246.3 661.6 245.1 660.1 247.8 656.7 248 652.4 244.9 652.4 240.5 648 238.5 644.6 238.1 641.2 232.4 Z M667.7 240.9 670.2 240.6 672.1 238 672.4 240.6 670.1 242 667.4 241.8 667.7 240.9 Z M670.9 234.7 673.2 238.6 672.9 239.4 670.6 235.3 670.9 234.7 Z M675.2 241.5 676.8 245.3 680 249.3 679.7 247.1 677.9 243.3 675.8 240.5 675.2 241.5 Z M605.5 274.2 612.1 271.5 620.2 269.3 623.1 265.4 625.5 263.4 628.6 260 632.5 257.9 634.3 260.3 637.2 259.8 638.4 255.2 642.8 253.1 646.6 254.4 649.5 254.4 646.7 259.9 652.6 264.8 655.8 259.6 656.7 254.7 658.5 251.2 658.9 257.5 661 259.4 660.6 266.8 662.8 269.4 664.7 277.9 662.9 282.9 660.4 287.1 652.2 296.6 646.7 300 645.4 299 642.5 299.4 640.8 298.5 640.4 295.8 640.7 293.7 639.5 295.3 638.4 295.5 641.2 291.8 637.5 294.8 636.4 291.8 632.5 290 624.5 291.6 620.9 293.4 610.6 296.5 606.2 295.4 607.7 292.5 607.1 287.5 605 282.4 604.9 278.8 605.5 274.2 Z M677.5 267.5 678.1 268.8 678.2 270.9 677.7 270.5 677.4 268.6 677.5 267.5 Z M643.5 302.5 646.9 302.4 644.4 305.5 642.9 306.1 642.7 304.5 643.5 302.5 Z M670.7 289.9 668.6 294 669.1 294 663.7 299.8 667.6 294.9 670.7 289.9 Z M664.1 298.7 661.9 301.3 656.7 306 655.1 307.1 654.7 306.7 664.1 298.7 Z M562.1 130.3 574.6 127.7 562.1 130.3 Z M585.4 126.8 588.9 126.8 585.4 126.8 Z M604 128.2 608.2 128.6 603.4 127.9 604 128.2 Z M620.5 131.7 622 132.2 620.5 131.7 Z M562.8 329.4 551.5 325.8 553.7 326.5 565.3 328.5 568.5 329.5 570.7 328.5 584.9 328 600.4 328.3 611.5 327.7 620.1 327.9 613.3 329.8 606.1 331.3 599 332.2 591.3 332.7 577.2 332 570 331 562.8 329.4 Z" fill="#e6e6e6"/>
<g clip-path="url(#lc)">
<path d="M590 240 L625 240 L625 252 L590 252Z M640 228 L680 228 L680 250 L640 250Z M493 253 L506 253 L506 276 L493 276Z M625 190 L645 190 L645 215 L625 215Z M577 208 L592 222 L588 226 L575 214Z M508 150 L530 140 L548 140 L545 150 L530 158 L515 162Z M550 168 L570 166 L585 170 L575 180 L558 180Z M592 164 L610 160 L614 174 L600 180Z M528 186 L548 178 L566 184 L572 196 L560 206 L548 222 L536 214 L528 200Z M552 232 L560 228 L562 236 L555 238Z M572 186 L590 178 L610 182 L614 196 L604 200 L590 196 L578 200Z M600 150 L620 146 L626 160 L612 168 L604 160Z M540 132 L575 128 L610 130 L618 138 L590 140 L560 142 L540 140Z M486 200 L500 205 L502 240 L495 260 L488 262Z" fill="#fff"/>
<path d="M575 148 L583 150 L591 151 L597 151 L595 157 L589 160 L583 161 L577 158 Z M543 158 L549 153 L557 150 L566 149 L569 152 L565 157 L556 162 L547 164Z" fill="url(#pd)"/>
<path d="M512 170 L520 163 L530 160 L537 162 L534 170 L527 178 L519 183 L513 180Z M499 197 L505 188 L511 181 L516 185 L510 193 L503 200Z M573 145 L598 148 L600 154 L575 156Z M538 160 L545 163 L548 168 L540 168Z" fill="url(#pm)"/>
<path d="M598 252 L672 252 L672 306 L598 306Z M540 140 L620 135 L625 160 L590 165 L560 170 L540 160Z" fill="url(#pwh)"/>
<path d="M559.8 150.8 565.8 148.7 570 148 570.8 149.8 564.9 151.2 559.8 150.8 Z M565.5 159.4 571.9 157.8 578.1 158.4 576.2 161.4 568 161.8 565.5 159.4 Z M626.7 273.8 638.9 271.6 647.8 273 648.6 280 644 285.3 634.8 287.5 626.3 284.5 620.6 279.4 626.7 273.8 Z M505.2 175.7 508.6 173.6 511.8 170.2 511.7 167.5 509.5 168 506.5 171.3 505.2 175.7 Z M579.2 150.2 585.1 147.7 596 146.5 604.4 147.9 600.6 149.6 579.2 150.2 Z" fill="url(#ps)"/>
<path d="M519 160 L521.5 162 L516 168 L511 177 L507 185 L502 192 L498.5 198 L496 197 L499 189 L503 179 L509 169 L514 163Z" fill="#808080"/>
</g>
<path d="M513.5 159.3 512 161 514.7 158.9 514.5 160 516.8 158.7 518.3 157.1 519.7 154.3 517.3 155.9 519.2 153.8 513.5 159.3 Z M527.1 151.3 524.9 152.7 522.4 155.3 520.2 159.4 517.9 162 517.4 163.6 518.1 164 520.2 163.6 523.4 158.2 524.9 157.8 524.2 157 525.2 155.5 524.7 155.2 525.4 153.8 530 150.7 528.9 150.5 527.1 151.3 Z" fill="#00cccc"/>
<path d="M538.9 319.9 545.9 322 557.5 323.7 572.2 324.8 588.8 325.2 605.4 324.8 620.1 323.7 631.7 322 638.7 319.9 M499.8 281.7 502.4 283 508.2 284.3 528.6 286.6 556.7 288 588.8 288.5 620.9 288 649 286.6 669.4 284.3 675.2 283 677.8 281.7 M485.8 229.7 691.8 229.7 M499.8 177.7 502.4 176.4 508.2 175.1 528.6 172.8 556.7 171.4 588.8 170.9 620.9 171.4 649 172.8 669.4 175.1 675.2 176.4 677.8 177.7 M538.9 139.5 545.9 137.4 557.5 135.7 572.2 134.6 588.8 134.2 605.4 134.6 620.1 135.7 631.7 137.4 638.7 139.5 M530.8 315 521 307.3 512.1 298.4 504.4 288.4 498.3 278.3 493.1 266.6 489.4 254.3 487.2 241.7 486.5 229.7 487.2 217.7 489.4 205.1 493.1 192.8 498.3 181.1 504.4 171 512.1 161 521 152.1 530.8 144.4 M572.8 331.5 566.4 330 560 327.8 553.8 324.7 547.7 320.8 541.9 316.1 536.3 310.6 531.2 304.4 526.9 298.2 522.5 290.6 519 283.3 515.7 274.7 513.2 266.6 511 257.2 509.6 248.5 508.6 238.6 508.4 229.7 508.6 220.8 509.6 210.9 511 202.2 513.2 192.8 515.7 184.7 519 176.1 522.5 168.8 526.9 161.2 531.2 155 536.3 148.8 541.9 143.3 547.7 138.6 553.8 134.7 560 131.6 566.4 129.4 572.8 127.9 M584.6 332.6 582 332 579.4 330.4 576.8 327.8 574.5 324.5 569.9 314.8 566 302.2 562.7 286.5 560.4 269.3 558.8 249.4 558.3 229.7 558.8 210 560.4 190.1 562.7 172.9 566 157.2 569.9 144.6 574.5 134.9 576.8 131.6 579.4 129 582 127.4 584.6 126.8 M593.1 332.6 595.8 332 598.5 330.4 601.2 327.8 603.6 324.5 606.2 319.9 608.4 314.8 612.5 302.2 615.9 286.5 618.4 269.3 619.9 249.4 620.5 229.7 619.9 210 618.4 190.1 615.9 172.9 612.5 157.2 608.4 144.6 606.2 139.5 603.6 134.9 601.2 131.6 598.5 129 595.8 127.4 593.1 126.8 M605 331.4 611.4 330 617.9 327.7 624.2 324.6 630.3 320.7 636.2 316 641.8 310.6 647 304.3 651.3 298.1 655.7 290.6 659.2 283.3 662.6 274.7 665.1 266.6 667.3 257.2 668.8 248.5 669.7 238.6 670 229.7 669.7 220.8 668.8 210.9 667.3 202.2 665.1 192.8 662.6 184.7 659.2 176.1 655.7 168.8 651.3 161.3 647 155.1 641.8 148.8 636.2 143.4 630.3 138.7 624.2 134.8 617.9 131.7 611.4 129.4 605 128 M649.1 313.3 658.7 305.4 666.8 297 674.3 286.8 680.2 276.6 685.2 264.8 688.5 253.4 690.5 241.6 691.2 229.7 690.5 217.8 688.5 206 685.2 194.6 680.2 182.8 674.3 172.6 666.8 162.4 658.7 154 649.1 146.1" fill="none" stroke="#7a7a7a" stroke-width="0.6"/>
<path d="M547.7 163.1 550.2 163.1 552.6 162.4 555.7 161.9 558.6 162.1 564.4 160.7 566.4 158.6 573.9 155.6 576.6 151.9 M547.6 164.1 549.3 163.7 558.1 164.1 563.6 163.9 565.6 166.2 568.8 166.9 575.6 166 578 167.6 578.5 173.8 577.1 175.2 M564.4 160.7 571.6 159.9 577.4 157.7 580.5 158.3 583.6 159.8 585.1 162 584.2 164.4 578 167.6 M573.9 155.6 578.4 155.5 587.7 156.9 591.6 156.6 593.3 159 590.9 161.3 591.8 162.8 590.1 163.6 587.6 166.3 584.2 164.4 M578.4 171.7 580.2 174.3 582.9 176.9 585.7 176 588.4 174.3 595.7 172.9 598.2 170.1 596.3 167.6 593.6 166.7 587.6 166.3 M582.9 176.9 586.6 177.8 588.4 180.5 591.2 179.6 595.9 178.7 597.7 176.9 596.6 174.3 595.7 172.9 M588.4 180.5 590.9 183.4 M591.6 156.6 596.4 156.9 598.3 156.2 599.2 154.8 602.3 154.9 603.5 153.5 605.6 152.9 608.7 153.7 611.1 153.1 614.4 150 613 148.2 611.2 146.9 614.5 143.8 614.5 141.8 614 141 M613 148.2 623.6 150.9 624.4 150.1 M611.1 153.1 612.8 153.2 615.1 152 618.1 152.7 620.8 154.4 M598.3 156.2 598.2 159.8 598.5 163.6 599.6 166 598 167.1 596.3 167.6 M599.2 154.8 603.2 156.3 603.8 159.9 603.3 162.1 598.5 163.6 M590.2 166.4 593.5 164.4 598.5 163.6 M603.3 162.1 606.5 161.4 608.3 163 610.9 163.8 612.9 163.4 M603.5 153.5 606 155 608.4 155.7 609.5 157 M606.5 161.4 608.3 158.5 609.4 158.1 M598.2 170.1 601.8 171.8 605.4 171.8 608.8 171.4 612.9 170.3 614.3 168.7 617 169.6 M599.6 166 603.2 167.7 607.4 167.7 607.9 165.3 610.9 163.8 M597.7 176.9 610.7 179.8 612.9 182.3 M596.6 174.3 605.4 171.8 M606.1 178.8 606.6 175.3 605.4 171.8 M610.7 179.8 613 176.3 613.5 173.7 617.1 174.6 M613.5 173.7 612.9 170.3 M591.2 179.6 595.1 181.4 598.8 180.5 601.7 181.5 600.9 185.1 598.3 186.1" fill="none" stroke="#5a5a5a" stroke-width="0.6"/>
<path d="M501.1 177 498.3 183.1 496 189.6 494.6 194.7 493.8 200.8 494 203.4 494.7 206.1 494.9 209.9 497.4 208.2 500.8 206.9 496.2 221 491.3 233.5 490.5 236.3 490.6 240.1 491.1 244.8 493.9 256.9 494.3 260.4 493.9 262.9 495.1 268 497.2 273.1 497.5 275.4 501.1 283 504.1 288.5 499.3 280.9 495.3 273.1 491.9 264.8 489.3 256.3 487.3 247.5 486.2 238.6 485.8 229.7 486.1 221.3 487.2 212.7 489 204.2 491.4 195.9 494.8 187.5 498.8 179.4 503.4 171.9 507.2 166.7 500 177.4 501.2 175.4 501.4 175.6 503.1 174.2 509.1 166.2 507.2 167.5 507.3 166.9 507 167.1 511.5 161.5 507.6 166.2 515.7 157 514.7 158 513.9 158.8 520.9 152.2 528.4 146.1 536.1 141.1 543.8 137 555.5 132.2 551.9 133.5 557.1 131.9 565.6 130.4 571 129 567.3 130.6 572.9 128.6 576.4 128.1 588.5 126.9 593.2 127.7 600.3 128 607.3 128.9 619.4 131.4 627.3 134.1 635.7 137.9 635.9 138.1 635.4 138.3 635.6 138.8 639.8 141.4 642.2 144 642.6 145.2 642.7 145.7 630.4 136.3 630.7 137.6 623.3 136.5 622.8 137.3 622.7 139.7 627.7 141.9 633.5 147.3 630.2 152.2 624.7 153.1 625.3 155.7 624.4 158.4 627.9 162.2 627.7 163.7 624.3 164.3 622.7 160.5 620.4 159.2 619 156.4 613.9 154.7 611.6 156.5 609.5 157 609.4 158.1 611.6 159.8 616.9 159.7 614.3 161.4 612.9 163.4 618.4 169.6 618.8 172.1 616.1 178.5 612.9 182.3 607 184.6 601.9 185.9 599.5 188.3 598.3 186.1 595.2 186 592.7 187.9 591 190.8 592.4 194.1 597.1 197.9 598.2 203.7 597.6 205.9 592.9 208.2 589.2 211.7 589.4 208.4 586.3 207.8 584.3 204.7 581.2 203.3 579.2 201.9 577.5 207.8 579.7 212.3 586.1 220.2 587.7 226.7 586.1 227 581.6 223.8 579.6 218.1 575.5 212.5 576 207.8 574.8 200.7 574.4 195.7 568.4 196.8 568.2 190.9 564.3 184.6 558.1 186.2 554.9 187.9 551.2 190.7 545.6 196 541.6 198.2 541 203.1 539.8 208.6 535.4 213.1 533.5 209.3 530.6 197.6 530.6 191.9 531.4 187.6 531.1 185.8 527.5 188.7 526.4 186.1 528.7 184.9 526.1 183.6 525.5 181.9 521.6 181.1 518.6 181.5 514.2 180.9 514.1 178.8 511.8 179.2 510 178 510.9 174.5 509.2 174.9 507.9 178.1 507.7 182.4 508.8 181.3 507.4 184.1 510.2 183.8 513.3 180.2 512.6 182.7 514.2 184.6 514.9 186.5 510.6 193 503.3 199.5 496.1 205.4 495 205.7 497.3 189.4 499.8 181.2 501.5 177.3 499.9 179.8 501.1 177 Z M499.2 252.8 501.6 259.4 502.5 267.5 504.4 275.9 503.5 276.7 501.1 273.1 499.5 269.6 498.7 265.3 497.3 261.7 498.3 259.6 499.2 252.8 Z M539.9 209.6 542 212.2 543.1 214.6 541.9 216.9 539.7 217.3 539.3 212.8 539.9 209.6 Z M596.5 190.4 599.5 188.7 601.1 189.7 600.3 191.8 598.3 192.4 596.5 191.8 596.5 190.4 Z M618.8 179.6 620.6 180 619.3 185.6 617.7 183.5 617.5 180.8 618.8 179.6 Z M631 165.4 631.5 164.4 633.1 163.3 637 163.1 637.5 161.4 639.7 159.9 639.3 158.1 638.2 156.3 639.5 155.7 641.6 158.3 641.6 160.3 642.9 163.2 643.1 164.7 639.1 165 637.5 166.4 634.6 165.3 631 165.4 Z M629.5 166.4 631.1 165.6 633.2 167.1 633.2 169.6 631.5 170 629.5 166.4 Z M633.9 166.9 634.6 165.1 636.3 165.4 636.2 166.9 634.7 167.5 633.9 166.9 Z M637.6 155.3 636.1 150.5 641.9 153.5 641 155 637.6 155.3 Z M635.8 149.8 636.6 149 633.8 146.3 631.7 143.7 628.2 140.8 635.8 149.8 Z M619.7 192 622.9 192.3 622.8 195 622.1 197.3 627.1 203 626.2 203.8 620.4 199.9 618.6 196.3 619.7 192 Z M624.1 215.1 626.8 211.9 630.1 209.7 632.6 214.6 631.8 217.3 628.6 216.8 624.1 215.1 Z M623.5 205.5 627.2 204 630.2 206 629.5 209 626.4 210.4 623.7 208 623.5 205.5 Z M614.5 212.2 618.8 206.3 619.2 207.9 615.5 212.4 614.5 212.2 Z M597.8 225.9 599.1 225.5 602 226.3 606.2 223 608.2 220 611.2 218.8 613.8 215.3 618.7 218.6 616.3 220.7 616 225.5 618.4 228 615.4 229.7 613.3 237.7 609.2 238.1 606.2 236.4 602 236 599.9 233.5 597.9 229.7 597.8 225.9 Z M569.2 218 573.8 218.8 579.5 224.4 586.7 227.6 588.4 233.5 591.5 236.4 591.1 241.9 588.4 242.1 583.8 238.1 576.2 226.1 571 221.7 569.2 218 Z M589.8 244 592.6 242.3 600.9 244.2 605 244.2 609.1 246 609 247.9 595.7 246.1 589.8 244 Z M610.1 246.8 625.9 246.9 625.8 247.9 612 248.3 610.1 246.8 Z M627.6 250.8 634 247 629.6 248.3 627.6 250.8 Z M618 236 619.3 241.2 621.1 241.2 621.4 236 623.3 239.7 625.8 239.1 623.4 233.7 627.1 231.8 622.4 231.4 620.8 228.7 623.4 227.6 630.2 226.4 628.9 228.7 620.8 229.1 618 236 Z M634.9 225.1 636.9 226.6 636.2 229.1 637.5 231.4 635.6 228.5 634.5 227.6 634.9 225.1 Z M635.7 236.5 640.8 236.3 640.2 237.5 636.1 237.2 635.7 236.5 Z M641.2 232.4 643.9 230.5 646.8 231.5 648.9 236.5 652.7 232.8 662.6 237.3 664.7 240.9 666.7 242.3 666 245.6 668.1 249.1 669.4 250.4 666.1 249.9 663.9 246.3 661.6 245.1 660.1 247.8 656.7 248 652.4 244.9 652.4 240.5 648 238.5 644.6 238.1 641.2 232.4 Z M667.7 240.9 670.2 240.6 672.1 238 672.4 240.6 670.1 242 667.4 241.8 667.7 240.9 Z M670.9 234.7 673.2 238.6 672.9 239.4 670.6 235.3 670.9 234.7 Z M675.2 241.5 676.8 245.3 680 249.3 679.7 247.1 677.9 243.3 675.8 240.5 675.2 241.5 Z M605.5 274.2 612.1 271.5 620.2 269.3 623.1 265.4 625.5 263.4 628.6 260 632.5 257.9 634.3 260.3 637.2 259.8 638.4 255.2 642.8 253.1 646.6 254.4 649.5 254.4 646.7 259.9 652.6 264.8 655.8 259.6 656.7 254.7 658.5 251.2 658.9 257.5 661 259.4 660.6 266.8 662.8 269.4 664.7 277.9 662.9 282.9 660.4 287.1 652.2 296.6 646.7 300 645.4 299 642.5 299.4 640.8 298.5 640.4 295.8 640.7 293.7 639.5 295.3 638.4 295.5 641.2 291.8 637.5 294.8 636.4 291.8 632.5 290 624.5 291.6 620.9 293.4 610.6 296.5 606.2 295.4 607.7 292.5 607.1 287.5 605 282.4 604.9 278.8 605.5 274.2 Z M677.5 267.5 678.1 268.8 678.2 270.9 677.7 270.5 677.4 268.6 677.5 267.5 Z M643.5 302.5 646.9 302.4 644.4 305.5 642.9 306.1 642.7 304.5 643.5 302.5 Z M670.7 289.9 668.6 294 669.1 294 663.7 299.8 667.6 294.9 670.7 289.9 Z M664.1 298.7 661.9 301.3 656.7 306 655.1 307.1 654.7 306.7 664.1 298.7 Z M562.1 130.3 574.6 127.7 562.1 130.3 Z M585.4 126.8 588.9 126.8 585.4 126.8 Z M604 128.2 608.2 128.6 603.4 127.9 604 128.2 Z M620.5 131.7 622 132.2 620.5 131.7 Z M562.8 329.4 551.5 325.8 553.7 326.5 565.3 328.5 568.5 329.5 570.7 328.5 584.9 328 600.4 328.3 611.5 327.7 620.1 327.9 613.3 329.8 606.1 331.3 599 332.2 591.3 332.7 577.2 332 570 331 562.8 329.4 Z M513.5 159.3 512 161 514.7 158.9 514.5 160 516.8 158.7 518.3 157.1 519.7 154.3 517.3 155.9 519.2 153.8 513.5 159.3 Z M527.1 151.3 524.9 152.7 522.4 155.3 520.2 159.4 517.9 162 517.4 163.6 518.1 164 520.2 163.6 523.4 158.2 524.9 157.8 524.2 157 525.2 155.5 524.7 155.2 525.4 153.8 530 150.7 528.9 150.5 527.1 151.3 Z" fill="none" stroke="#000" stroke-width="0.65"/>
<path d="M626.4 146.3 626.9 148.7 626.8 150 625.2 149.7 624.4 150.1 626.1 152.9 625.5 153.3 624.1 152.5 623.6 153.5 620.8 154.4 619.4 155.2 618.4 156.2 M626.4 146.3 624.1 146.9 622.3 146.7 621.1 145.4 617 144.1 616 142.6 614 141 610.3 140.1 608.1 140.1 607.1 140.7 607.8 141.2 606.8 142.9 605.5 143.9 604 143.6 M604 143.6 603 145.4 606.4 146 609 146.8 608.4 147.3 606.2 147.2 604.7 148.2 601.4 149.3 599.2 150.6 598.8 151.5 591.9 152.3 589.1 153.1 583 152 576.6 151.9 575.4 149.9 573 149.2 569.6 148.8 569.9 147.2 569.5 145.8 568.2 145.6 567.3 144.4 M567.3 144.4 568.9 144 570.6 142.8 573.5 142.5 575.8 142.7 577.1 143.3 579.3 143.6 580.6 142.8 580.2 142.2 581.7 141 585.6 141.7 585.9 142.9 591.5 142.8 593.7 143.9 596.6 144.2 599.3 143.8 601 143.1 604 143.6 M567.3 144.4 566.3 144.5 564 145.9 563.3 147.1 560.6 147 558.5 149.1 558.7 149.4 555.2 150 555.1 152.1 553.7 153.5 547.8 156.1 543.5 157.7 543.1 159 543.7 160.6 543 161.2 544.4 161.5 545.5 162.8 546.4 163.1 546.9 167.7 545.5 169.4 548.5 171.3 550.2 171.4 551.7 172.4 552.7 173.9 555.6 174.9 559.1 174.8 560.4 174.3 562 174.3 565.2 174.9 565.8 176.4 568.2 176.4 570.8 172.2 573.4 172 575.6 174 M575.6 174 577.1 175.2 577.7 178 575.4 181.6 577.8 181.3 579.9 185.9 582 185.5 583 184.2 583.8 184.4 585.9 183.6 590.9 183.4 592.7 185.1 595.2 186 M566.3 144.5 563.1 142.8 559.2 143.2 558.7 140.9 558.1 140.1 554.5 141 553.8 139.5 544.8 141.6 541.3 143.8 538 145.3 536 145.9 535.4 145.2 534.5 145.2 528.6 148.8 527.4 150 527.4 151 M553.7 153.5 552.6 152.7 549.9 152.6 548.4 153 547 152.5 545.6 153.6 542.5 154.1 538.3 156.6 538.4 155.5 536.7 156 537.5 153.8 534.1 152.4 533 151.2 530.3 152.3 526.3 157.1 524.8 156.4 524.2 157 M545.6 153.6 540.7 155.9 541.5 156.9 543.5 157.7 M538.3 156.6 538 158 536.2 158.3 535.5 160.3 534.6 161.7 M520.6 163 522.7 161.8 524.3 161.5 525.6 162 526 163.2 526 164.6 526.7 165.3 532.2 161.6 533.3 161.4 534.6 161.7 537.5 160.9 538.8 161.9 539.4 160.2 540.5 161.3 543.7 160.6 M533.3 161.4 533.9 160.5 531.9 159.3 530.7 155.7 529.8 155.2 526.4 157.1 M526 164.6 523.6 167.6 522.3 171 523.1 171.1 521.1 173.6 522.8 174.3 522 177.7 519.5 179.4 518.6 181.5 M522.8 174.3 527.4 173.1 529.1 170.7 532.6 169.5 536.4 166 538.5 162.8 540.8 161.6 543 161.2 M546.4 163.1 543.5 164.2 541.3 164.5 540 167.9 540.6 168.2 539.1 170.5 533.6 175.9 530.6 177.6 530.4 182.1 528.4 182.4 526.1 183.6 M546.3 173.8 548.3 174.5 550.4 176 552.8 176.2 555.1 177.2 558.7 177.5 M558.7 177.5 560.1 178.1 561.8 177.6 565.2 179.6 565.6 181.6 564 183.6 565.1 186.2 M558.7 177.5 559.1 179 558.6 180.3 559.1 183.7 559 186 M560.4 174.3 558.8 176.4 558.7 177.5 M575.6 174 571.9 176.7 570 179.4 569.6 181.2 567.2 183.4 566.5 185.3 565.1 186.2 M575.4 208.4 577.8 202.7 575.9 198.3 577.2 195.7 574.6 191.8 575.7 189.5 579.8 188.1 579.9 185.9 M579.8 188.1 581.9 189.8 580.7 192.8 586.4 192.1 588.8 193.7 590.6 197.7 589.8 200 585.3 200.3 583.9 204.3 M583.8 184.4 584.5 185.8 587.4 187.7 588 189.3 589.6 191 588.6 192 592.4 195.7 594.5 198.3 594.5 199.7 591.5 201.9 591.1 205.5 588.4 208 M590.6 197.7 594.5 199.7 M579.2 216.1 582.7 217.5 583.4 216.7 M622.1 159.5 623.2 158.7 624.7 158.3 M599.1 225.9 602 227.6 605.2 226.5 609.3 226.5 611.5 221.3 615.5 220.9 M657.6 235 656.7 248 M629.3 250.2 629.8 248.9 M496.2 198.9 497.8 197 499.2 197 502 194.4 504.7 193.5 503.7 198 M504.7 193.5 508.2 191.4 510.4 186.5 507.8 184.6 507.7 184.1 M510.4 186.5 512.6 182.7 M501.5 177.3 501.6 177.7 504.1 173.9 505.8 172.5 506.2 173.8 506.2 176.6 508 176.6 508.2 177.3 M507.4 176.6 509.2 174.9 M504.4 172.7 504.8 172.7 509 168.9 511 165.8 512.4 164.8 M504.8 171.8 507.1 168.8 M501.5 177.3 502.9 174.6 M509.2 174.9 509.8 173.4 510.1 171 511 169 512.5 167.2 514.8 162.6 516.6 160.7 M509.1 166.2 511.4 165 513.9 164.3 M516.9 158.7 517.4 159 518.5 158.5 519 158.7 521.3 157.4 M518.3 156.4 519.3 156.3 520.1 157.5 520.2 158.3 521.3 157.4 M516.6 160.7 516.5 161.6 518.5 160.3 517.7 161.8 517.9 162 M516.9 158.7 517 159.3 516.2 160.5 516.6 160.7 M494.4 190.1 496.4 189.5 M496.4 189.5 494.7 196.4 493.6 198.3 490 209.3 489.5 210.2 488.8 216.3 487.6 222.6 M494.7 196.4 494.1 199 494.2 206.1 494.7 205.7 M491.9 203.2 494.1 201.8 M487.6 222.6 488.7 221.1 490 223.1 491.2 222.3 491.7 222.3 494.4 219.2 496.7 214.3 494.1 212.6 493.7 211.1 493.8 209.7 494.5 207.3 M491.7 222.3 491 225.3 490.9 231.4 491.3 232.9 M487.6 231.6 490.3 238.6 M487.6 231.6 487.9 221.9 487.6 222.6 M486.4 231.9 487.6 231.6 M490 251 491.2 251.4 492.3 249.5 M487.7 245 490 251 M490 251 491.2 256.4 492.5 259.6 492.6 260.8 490.9 257.2 490.5 258.1 M490.5 258.1 490.8 259.4 491.7 260.2 494.7 270 498.5 277.5 M494.7 270 494.1 269.3 495.5 273.3 M518.5 156.3 518.3 156.4 M522.8 151.6 524.2 150.7 526 149 525.8 148.5 528.4 146.4 527 147.2 M527 147.2 531.8 143.8  M487 230.3 487.3 229.3 487.7 231.2 487.5 234.5 487 233.4 487 230.3" fill="none" stroke="#000" stroke-width="0.75"/>
<path d="M503.4 238.8 h0.01 M511.0 268.6 h0.01 M509.4 270.0 h0.01 M494.5 251.9 h0.01 M526.7 244.6 h0.01 M528.1 222.5 h0.01 M527.6 226.6 h0.01 M564.4 204.8 h0.01 M564.6 205.8 h0.01 M565.7 213.0 h0.01 M660.9 203.1 h0.01 M646.7 214.4 h0.01 M661.5 199.7 h0.01 M685.7 262.1 h0.01 M682.1 258.8 h0.01 M650.9 177.9 h0.01 M629.9 177.6 h0.01 M687.3 216.5 h0.01 M671.4 215.1 h0.01 M678.2 216.3 h0.01 M572.7 255.1 h0.01 M590.7 251.6 h0.01 M503.6 205.4 h0.01 M639.9 245.1 h0.01 M641.7 244.5 h0.01 M646.9 242.0 h0.01 M632.9 237.0 h0.01 M632.1 233.9 h0.01 M638.5 235.5 h0.01 M626.3 232.8 h0.01 M625.2 239.1 h0.01 M679.7 239.4 h0.01 M680.1 247.0 h0.01 M683.8 249.6 h0.01 M681.4 264.9 h0.01 M517.8 268.2 h0.01 M547.4 299.7 h0.01 M546.9 313.7 h0.01 M629.4 166.6 h0.01 M643.1 166.9 h0.01 M624.2 181.0 h0.01 M624.1 251.4 h0.01 M619.9 250.5 h0.01 M614.2 244.3 h0.01" fill="none" stroke="#000" stroke-width="1.3" stroke-linecap="round"/>
</g>
<path d="M486.5 229.7 A102.3 102.3 0 0 0 691.1 229.7" fill="none" stroke="#b8902a" stroke-width="0.7" opacity="0.7"/>
<circle cx="588.8" cy="229.7" r="102.9" fill="none" stroke="#1a1a1a" stroke-width="1.4"/>
</svg>
<div class="a" style="left:567.5px;top:110.8px;font:bold 9px 'Liberation Sans';color:#1a1a1a;white-space:pre;will-change:transform">FY4A FHS</div>
<div class="a gl" style="left:516.4px;top:130.3px">60<span style='position:relative;top:1px'>°</span>N</div>
<div class="a gl" style="left:641.9px;top:130.3px">60<span style='position:relative;top:1px'>°</span>N</div>
<div class="a gl" style="left:477.7px;top:168.4px">30<span style='position:relative;top:1px'>°</span>N</div>
<div class="a gl" style="left:680.7px;top:168.4px">30<span style='position:relative;top:1px'>°</span>N</div>
<div class="a gl" style="left:474.8px;top:223.7px">0<span style='position:relative;top:1px'>°</span></div>
<div class="a gl" style="left:695.2px;top:223.6px">0<span style='position:relative;top:1px'>°</span></div>
<div class="a gl" style="left:478.6px;top:279.3px">30<span style='position:relative;top:1px'>°</span>S</div>
<div class="a gl" style="left:680.7px;top:279.5px">30<span style='position:relative;top:1px'>°</span>S</div>
<div class="a gl" style="left:517.1px;top:317.4px">60<span style='position:relative;top:1px'>°</span>S</div>
<div class="a gl" style="left:642.3px;top:317.5px">60<span style='position:relative;top:1px'>°</span>S</div>
<div class="a" style="left:718.5px;top:146.80px;width:8px;height:14.15px;background:#ffffff"></div>
<div class="a gl" style="left:729.5px;top:148.23px">space</div>
<div class="a" style="left:718.5px;top:160.65px;width:8px;height:14.15px;background:#808080"></div>
<div class="a gl" style="left:729.5px;top:162.08px">flare_angle&lt;30</div>
<div class="a" style="left:718.5px;top:174.50px;width:8px;height:14.15px;background:#808080"></div>
<div class="a gl" style="left:729.5px;top:175.93px">zenithangle&gt;80</div>
<div class="a" style="left:718.5px;top:188.35px;width:8px;height:14.15px;background:#ff0000"></div>
<div class="a gl" style="left:729.5px;top:189.78px">fire point</div>
<div class="a" style="left:718.5px;top:202.20px;width:8px;height:14.15px;background:#e6e6e6"></div>
<div class="a gl" style="left:729.5px;top:203.63px">land</div>
<div class="a" style="left:718.5px;top:216.05px;width:8px;height:14.15px;background:#ffffff"></div>
<div class="a gl" style="left:729.5px;top:217.48px">cloud05</div>
<div class="a" style="left:718.5px;top:229.90px;width:8px;height:14.15px;background:#ffffff"></div>
<div class="a gl" style="left:729.5px;top:231.33px">cloud04</div>
<div class="a" style="left:718.5px;top:243.75px;width:8px;height:14.15px;background:#ffffff"></div>
<div class="a gl" style="left:729.5px;top:245.18px">cloud03</div>
<div class="a" style="left:718.5px;top:257.60px;width:8px;height:14.15px;background:#ffffff"></div>
<div class="a gl" style="left:729.5px;top:259.03px">cloud02</div>
<div class="a" style="left:718.5px;top:271.45px;width:8px;height:14.15px;background:#ffffff"></div>
<div class="a gl" style="left:729.5px;top:272.88px">cloud01</div>
<div class="a" style="left:718.5px;top:285.30px;width:8px;height:14.15px;background:#00cccc"></div>
<div class="a gl" style="left:729.5px;top:286.73px">water</div>
<div class="a" style="left:718.5px;top:299.15px;width:8px;height:14.15px;background:#cc9900"></div>
<div class="a gl" style="left:729.5px;top:300.57px">desert</div>
<div class="a" style="left:718px;top:146.5px;width:9px;height:167px;border:1px solid #333"></div>
<!-- bottom tabs -->
<svg class="a" style="left:412px;top:395px" width="7" height="8" viewBox="0 0 7 8"><path d="M2.3 0 H6 V7.2 H0 V2.3 Z" fill="#f4f4f4"/></svg>
<div class="ui" style="left:422.70px;top:394.1px;font-size:8px;color:#c4c8cb;letter-spacing:-0.014px;">Variable explorer</div>
<svg class="a" style="left:500px;top:395px" width="7" height="8" viewBox="0 0 7 8"><path d="M2.3 0 H6 V7.2 H0 V2.3 Z" fill="#f4f4f4"/></svg>
<div class="ui" style="left:510.70px;top:394.1px;font-size:8px;color:#c4c8cb;letter-spacing:-0.063px;">File explorer</div>
<svg class="a" style="left:572px;top:395px" width="7" height="8" viewBox="0 0 7 8"><path d="M2.3 0 H6 V7.2 H0 V2.3 Z" fill="#f4f4f4"/></svg>
<div class="ui" style="left:582.30px;top:394.1px;font-size:8px;color:#c4c8cb;letter-spacing:-0.213px;">Figures</div>
<div class="a" style="left:562px;top:388px;width:54px;height:2px;background:#4a8ad0"></div>
<!-- status -->
<div class="a" style="left:0;top:408px;width:800px;height:17px;background:#3c3f41;border-top:1px solid #2b2d2f;border-bottom:1px solid #2b2d2f"></div>
</body></html>
